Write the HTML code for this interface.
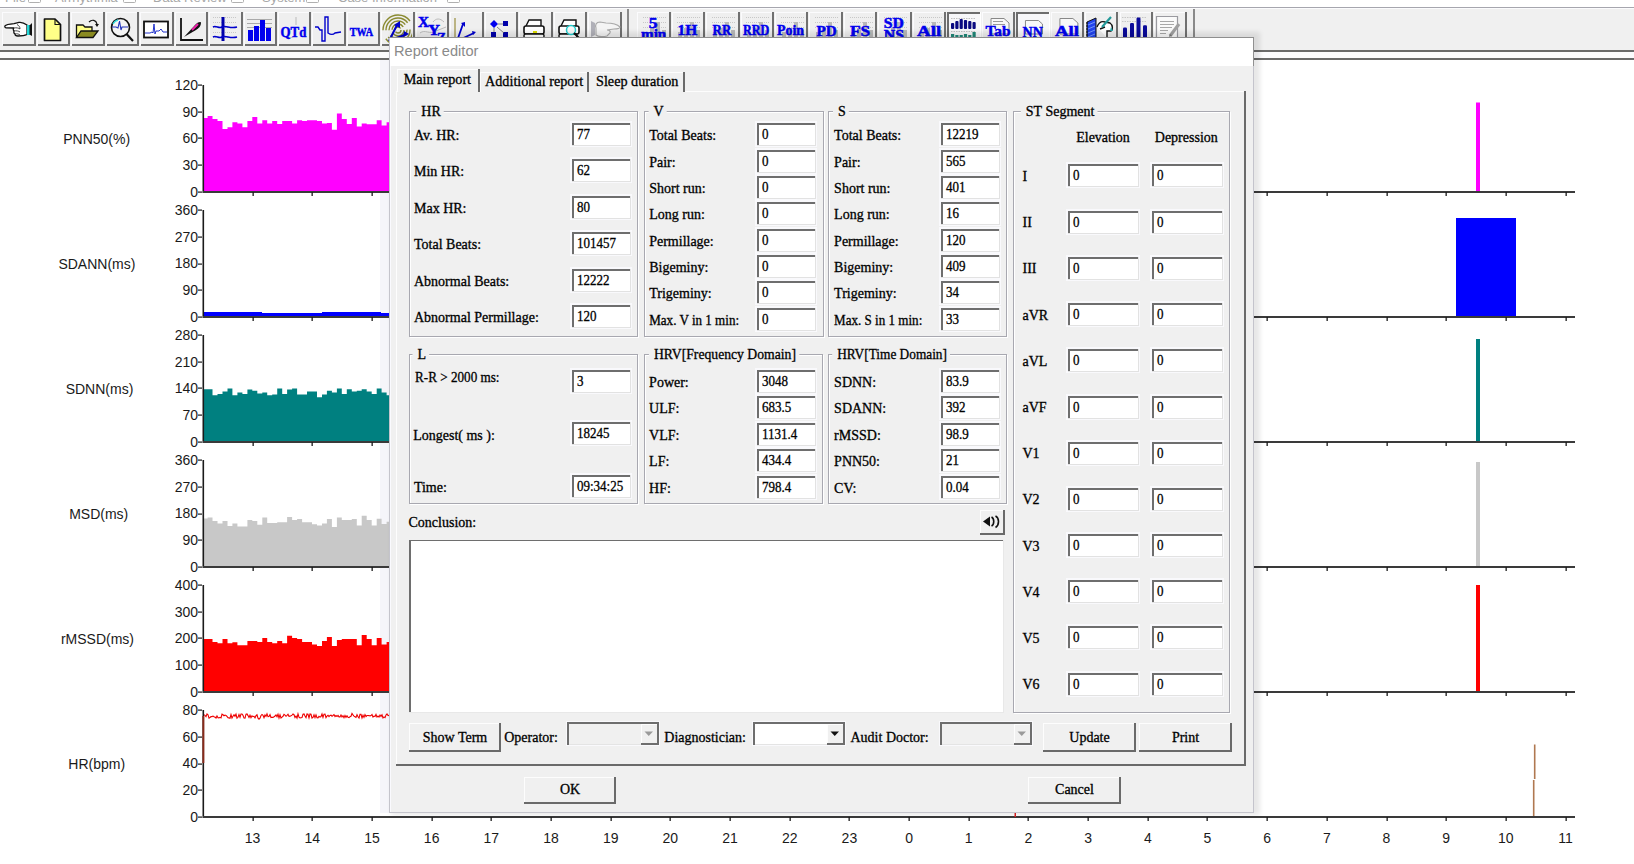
<!DOCTYPE html>
<html><head><meta charset="utf-8"><title>Report editor</title>
<style>html,body{margin:0;padding:0;background:#fff;overflow:hidden}svg{display:block}text{white-space:pre}</style></head>
<body><svg width="1634" height="864" viewBox="0 0 1634 864">
<defs><filter id="blur" x="-5%" y="-5%" width="110%" height="110%"><feGaussianBlur stdDeviation="2.5"/></filter></defs>
<rect x="0" y="0" width="1634" height="864" fill="#ffffff" />
<rect x="0" y="0" width="1634" height="7" fill="#ffffff" />
<text x="5" y="2.2" font-family="Liberation Sans" font-size="13" fill="#a8a8a8" text-anchor="start" >File</text>
<rect x="28.5" y="-7.5" width="12" height="10" rx="1" fill="none" stroke="#b0b0b0"/>
<text x="55" y="2.2" font-family="Liberation Sans" font-size="13" fill="#a8a8a8" text-anchor="start" >Arrhythmia</text>
<rect x="123.5" y="-7.5" width="12" height="10" rx="1" fill="none" stroke="#b0b0b0"/>
<text x="153" y="2.2" font-family="Liberation Sans" font-size="13" fill="#a8a8a8" text-anchor="start" >Data Review</text>
<rect x="231.5" y="-7.5" width="12" height="10" rx="1" fill="none" stroke="#b0b0b0"/>
<text x="262" y="2.2" font-family="Liberation Sans" font-size="13" fill="#a8a8a8" text-anchor="start" >System</text>
<rect x="306.5" y="-7.5" width="12" height="10" rx="1" fill="none" stroke="#b0b0b0"/>
<text x="338" y="2.2" font-family="Liberation Sans" font-size="13" fill="#a8a8a8" text-anchor="start" >Case Information</text>
<rect x="447.5" y="-7.5" width="12" height="10" rx="1" fill="none" stroke="#b0b0b0"/>
<rect x="0" y="7" width="1634" height="1" fill="#a6a6ae" />
<rect x="0" y="8" width="1634" height="43" fill="#f0f0f0" />
<rect x="0" y="8" width="1634" height="1" fill="#fbfbfd" />
<rect x="0" y="50" width="1634" height="2" fill="#6a6a6a" />
<rect x="0" y="52" width="1634" height="6" fill="#fbfbfd" />
<rect x="0" y="58" width="1634" height="2" fill="#6a6a6a" />
<rect x="2" y="12" width="34" height="33" fill="#efefef" />
<rect x="2" y="12" width="34" height="1" fill="#fbfbfd" />
<rect x="2" y="12" width="1" height="33" fill="#fbfbfd" />
<rect x="3" y="44" width="33" height="2" fill="#707070" />
<rect x="34" y="12" width="2" height="34" fill="#707070" />
<rect x="37" y="12" width="33" height="33" fill="#efefef" />
<rect x="37" y="12" width="33" height="1" fill="#fbfbfd" />
<rect x="37" y="12" width="1" height="33" fill="#fbfbfd" />
<rect x="38" y="44" width="32" height="2" fill="#707070" />
<rect x="68" y="12" width="2" height="34" fill="#707070" />
<rect x="71" y="12" width="34" height="33" fill="#efefef" />
<rect x="71" y="12" width="34" height="1" fill="#fbfbfd" />
<rect x="71" y="12" width="1" height="33" fill="#fbfbfd" />
<rect x="72" y="44" width="33" height="2" fill="#707070" />
<rect x="103" y="12" width="2" height="34" fill="#707070" />
<rect x="106" y="12" width="33" height="33" fill="#efefef" />
<rect x="106" y="12" width="33" height="1" fill="#fbfbfd" />
<rect x="106" y="12" width="1" height="33" fill="#fbfbfd" />
<rect x="107" y="44" width="32" height="2" fill="#707070" />
<rect x="137" y="12" width="2" height="34" fill="#707070" />
<rect x="140" y="12" width="34" height="33" fill="#efefef" />
<rect x="140" y="12" width="34" height="1" fill="#fbfbfd" />
<rect x="140" y="12" width="1" height="33" fill="#fbfbfd" />
<rect x="141" y="44" width="33" height="2" fill="#707070" />
<rect x="172" y="12" width="2" height="34" fill="#707070" />
<rect x="175" y="12" width="33" height="33" fill="#efefef" />
<rect x="175" y="12" width="33" height="1" fill="#fbfbfd" />
<rect x="175" y="12" width="1" height="33" fill="#fbfbfd" />
<rect x="176" y="44" width="32" height="2" fill="#707070" />
<rect x="206" y="12" width="2" height="34" fill="#707070" />
<rect x="209" y="12" width="34" height="33" fill="#efefef" />
<rect x="209" y="12" width="34" height="1" fill="#fbfbfd" />
<rect x="209" y="12" width="1" height="33" fill="#fbfbfd" />
<rect x="210" y="44" width="33" height="2" fill="#707070" />
<rect x="241" y="12" width="2" height="34" fill="#707070" />
<rect x="244" y="12" width="33" height="33" fill="#efefef" />
<rect x="244" y="12" width="33" height="1" fill="#fbfbfd" />
<rect x="244" y="12" width="1" height="33" fill="#fbfbfd" />
<rect x="245" y="44" width="32" height="2" fill="#707070" />
<rect x="275" y="12" width="2" height="34" fill="#707070" />
<rect x="278" y="12" width="33" height="33" fill="#efefef" />
<rect x="278" y="12" width="33" height="1" fill="#fbfbfd" />
<rect x="278" y="12" width="1" height="33" fill="#fbfbfd" />
<rect x="279" y="44" width="32" height="2" fill="#707070" />
<rect x="309" y="12" width="2" height="34" fill="#707070" />
<rect x="312" y="12" width="34" height="33" fill="#efefef" />
<rect x="312" y="12" width="34" height="1" fill="#fbfbfd" />
<rect x="312" y="12" width="1" height="33" fill="#fbfbfd" />
<rect x="313" y="44" width="33" height="2" fill="#707070" />
<rect x="344" y="12" width="2" height="34" fill="#707070" />
<rect x="347" y="12" width="33" height="33" fill="#efefef" />
<rect x="347" y="12" width="33" height="1" fill="#fbfbfd" />
<rect x="347" y="12" width="1" height="33" fill="#fbfbfd" />
<rect x="348" y="44" width="32" height="2" fill="#707070" />
<rect x="378" y="12" width="2" height="34" fill="#707070" />
<rect x="381" y="12" width="34" height="33" fill="#efefef" />
<rect x="381" y="12" width="34" height="1" fill="#fbfbfd" />
<rect x="381" y="12" width="1" height="33" fill="#fbfbfd" />
<rect x="382" y="44" width="33" height="2" fill="#707070" />
<rect x="413" y="12" width="2" height="34" fill="#707070" />
<rect x="416" y="12" width="33" height="33" fill="#efefef" />
<rect x="416" y="12" width="33" height="1" fill="#fbfbfd" />
<rect x="416" y="12" width="1" height="33" fill="#fbfbfd" />
<rect x="417" y="44" width="32" height="2" fill="#707070" />
<rect x="447" y="12" width="2" height="34" fill="#707070" />
<rect x="450" y="12" width="34" height="33" fill="#efefef" />
<rect x="450" y="12" width="34" height="1" fill="#fbfbfd" />
<rect x="450" y="12" width="1" height="33" fill="#fbfbfd" />
<rect x="451" y="44" width="33" height="2" fill="#707070" />
<rect x="482" y="12" width="2" height="34" fill="#707070" />
<rect x="485" y="12" width="33" height="33" fill="#efefef" />
<rect x="485" y="12" width="33" height="1" fill="#fbfbfd" />
<rect x="485" y="12" width="1" height="33" fill="#fbfbfd" />
<rect x="486" y="44" width="32" height="2" fill="#707070" />
<rect x="516" y="12" width="2" height="34" fill="#707070" />
<rect x="519" y="12" width="34" height="33" fill="#efefef" />
<rect x="519" y="12" width="34" height="1" fill="#fbfbfd" />
<rect x="519" y="12" width="1" height="33" fill="#fbfbfd" />
<rect x="520" y="44" width="33" height="2" fill="#707070" />
<rect x="551" y="12" width="2" height="34" fill="#707070" />
<rect x="554" y="12" width="33" height="33" fill="#efefef" />
<rect x="554" y="12" width="33" height="1" fill="#fbfbfd" />
<rect x="554" y="12" width="1" height="33" fill="#fbfbfd" />
<rect x="555" y="44" width="32" height="2" fill="#707070" />
<rect x="585" y="12" width="2" height="34" fill="#707070" />
<rect x="588" y="12" width="34" height="33" fill="#efefef" />
<rect x="588" y="12" width="34" height="1" fill="#fbfbfd" />
<rect x="588" y="12" width="1" height="33" fill="#fbfbfd" />
<rect x="589" y="44" width="33" height="2" fill="#707070" />
<rect x="620" y="12" width="2" height="34" fill="#707070" />
<rect x="627" y="9" width="2" height="38" fill="#8a8a8a" />
<rect x="637" y="12" width="34" height="33" fill="#efefef" />
<rect x="637" y="12" width="34" height="1" fill="#fbfbfd" />
<rect x="637" y="12" width="1" height="33" fill="#fbfbfd" />
<rect x="638" y="44" width="33" height="2" fill="#707070" />
<rect x="669" y="12" width="2" height="34" fill="#707070" />
<rect x="672" y="12" width="33" height="33" fill="#efefef" />
<rect x="672" y="12" width="33" height="1" fill="#fbfbfd" />
<rect x="672" y="12" width="1" height="33" fill="#fbfbfd" />
<rect x="673" y="44" width="32" height="2" fill="#707070" />
<rect x="703" y="12" width="2" height="34" fill="#707070" />
<rect x="706" y="12" width="34" height="33" fill="#efefef" />
<rect x="706" y="12" width="34" height="1" fill="#fbfbfd" />
<rect x="706" y="12" width="1" height="33" fill="#fbfbfd" />
<rect x="707" y="44" width="33" height="2" fill="#707070" />
<rect x="738" y="12" width="2" height="34" fill="#707070" />
<rect x="741" y="12" width="33" height="33" fill="#efefef" />
<rect x="741" y="12" width="33" height="1" fill="#fbfbfd" />
<rect x="741" y="12" width="1" height="33" fill="#fbfbfd" />
<rect x="742" y="44" width="32" height="2" fill="#707070" />
<rect x="772" y="12" width="2" height="34" fill="#707070" />
<rect x="775" y="12" width="33" height="33" fill="#efefef" />
<rect x="775" y="12" width="33" height="1" fill="#fbfbfd" />
<rect x="775" y="12" width="1" height="33" fill="#fbfbfd" />
<rect x="776" y="44" width="32" height="2" fill="#707070" />
<rect x="806" y="12" width="2" height="34" fill="#707070" />
<rect x="809" y="12" width="34" height="33" fill="#efefef" />
<rect x="809" y="12" width="34" height="1" fill="#fbfbfd" />
<rect x="809" y="12" width="1" height="33" fill="#fbfbfd" />
<rect x="810" y="44" width="33" height="2" fill="#707070" />
<rect x="841" y="12" width="2" height="34" fill="#707070" />
<rect x="844" y="12" width="33" height="33" fill="#efefef" />
<rect x="844" y="12" width="33" height="1" fill="#fbfbfd" />
<rect x="844" y="12" width="1" height="33" fill="#fbfbfd" />
<rect x="845" y="44" width="32" height="2" fill="#707070" />
<rect x="875" y="12" width="2" height="34" fill="#707070" />
<rect x="878" y="12" width="34" height="33" fill="#efefef" />
<rect x="878" y="12" width="34" height="1" fill="#fbfbfd" />
<rect x="878" y="12" width="1" height="33" fill="#fbfbfd" />
<rect x="879" y="44" width="33" height="2" fill="#707070" />
<rect x="910" y="12" width="2" height="34" fill="#707070" />
<rect x="913" y="12" width="33" height="33" fill="#efefef" />
<rect x="913" y="12" width="33" height="1" fill="#fbfbfd" />
<rect x="913" y="12" width="1" height="33" fill="#fbfbfd" />
<rect x="914" y="44" width="32" height="2" fill="#707070" />
<rect x="944" y="12" width="2" height="34" fill="#707070" />
<rect x="947" y="12" width="34" height="33" fill="#f7f7f9" />
<rect x="947" y="12" width="34" height="2" fill="#6d6d6d" />
<rect x="947" y="12" width="2" height="33" fill="#6d6d6d" />
<rect x="947" y="44" width="34" height="1" fill="#ffffff" />
<rect x="980" y="12" width="1" height="33" fill="#ffffff" />
<rect x="982" y="12" width="33" height="33" fill="#efefef" />
<rect x="982" y="12" width="33" height="1" fill="#fbfbfd" />
<rect x="982" y="12" width="1" height="33" fill="#fbfbfd" />
<rect x="983" y="44" width="32" height="2" fill="#707070" />
<rect x="1013" y="12" width="2" height="34" fill="#707070" />
<rect x="1016" y="12" width="34" height="33" fill="#f7f7f9" />
<rect x="1016" y="12" width="34" height="2" fill="#6d6d6d" />
<rect x="1016" y="12" width="2" height="33" fill="#6d6d6d" />
<rect x="1016" y="44" width="34" height="1" fill="#ffffff" />
<rect x="1049" y="12" width="1" height="33" fill="#ffffff" />
<rect x="1051" y="12" width="33" height="33" fill="#efefef" />
<rect x="1051" y="12" width="33" height="1" fill="#fbfbfd" />
<rect x="1051" y="12" width="1" height="33" fill="#fbfbfd" />
<rect x="1052" y="44" width="32" height="2" fill="#707070" />
<rect x="1082" y="12" width="2" height="34" fill="#707070" />
<rect x="1085" y="12" width="33" height="33" fill="#efefef" />
<rect x="1085" y="12" width="33" height="1" fill="#fbfbfd" />
<rect x="1085" y="12" width="1" height="33" fill="#fbfbfd" />
<rect x="1086" y="44" width="32" height="2" fill="#707070" />
<rect x="1116" y="12" width="2" height="34" fill="#707070" />
<rect x="1120" y="12" width="33" height="33" fill="#efefef" />
<rect x="1120" y="12" width="33" height="1" fill="#fbfbfd" />
<rect x="1120" y="12" width="1" height="33" fill="#fbfbfd" />
<rect x="1121" y="44" width="32" height="2" fill="#707070" />
<rect x="1151" y="12" width="2" height="34" fill="#707070" />
<rect x="1154" y="12" width="33" height="33" fill="#efefef" />
<rect x="1154" y="12" width="33" height="1" fill="#fbfbfd" />
<rect x="1154" y="12" width="1" height="33" fill="#fbfbfd" />
<rect x="1155" y="44" width="32" height="2" fill="#707070" />
<rect x="1185" y="12" width="2" height="34" fill="#707070" />
<rect x="1193" y="9" width="2" height="38" fill="#8a8a8a" />
<path d="M5,25.8 C6,24.5 10,24 14,23.6 L19,22.4 C22,22 25,23.5 27,25 L27,34.5 C25,35.5 22,36 18,36 C16,36 15,35 15,34 C14,33.5 13.5,32 14,31 C13,30 13,28.5 14,28 L6,27.8 C4.8,27.6 4.6,26.5 5,25.8 Z" fill="#fff" stroke="#111" stroke-width="1.3"/>
<path d="M14,28 C16,27.5 19,28 20,29 M14,31 C16,30.5 19,31 20,32 M15,34 C17,33.5 19,34 20,35 M17,24.5 C19,25.5 20,27 20,29" fill="none" stroke="#333" stroke-width="0.9"/>
<rect x="27" y="25" width="3" height="10" fill="#22d8d8"/><path d="M29.5,25.5 L32,23 L32,36 L29.5,34.5 Z" fill="#111"/>
<path d="M44.5,19 L55,19 L60.5,24.5 L60.5,40.5 L44.5,40.5 Z" fill="#ffff88" stroke="#111" stroke-width="1.7" stroke-linejoin="round"/><path d="M55,19 L55,24.5 L60.5,24.5" fill="none" stroke="#111" stroke-width="1.1"/>
<path d="M76.5,25 L83,25 L85,27 L92,27 L92,37 L76.5,37 Z" fill="#ffff88" stroke="#111" stroke-width="1.3"/><path d="M76.5,37.5 L81,31 L98,31 L93,37.5 Z" fill="#8a8a20" stroke="#111" stroke-width="1.3"/><path d="M89,22 C92,19 96,20 97,24" fill="none" stroke="#111" stroke-width="1.2"/><path d="M95,24 L99,24 L97,27 Z" fill="#111"/>
<circle cx="120.5" cy="27.5" r="9" fill="#f4f4f4" stroke="#111" stroke-width="1.6"/><path d="M112,27 L116,27 L118,28 L119.5,21 L121,30 L122,27 L128,27" fill="none" stroke="#2233bb" stroke-width="1.1"/><path d="M126.5,34 L133,41" stroke="#111" stroke-width="2.2"/><path d="M113,24 A8,8 0 0 1 118,20" stroke="#33dddd" stroke-width="1.5" fill="none"/>
<rect x="144" y="21.5" width="24" height="16" fill="#fff" stroke="#111" stroke-width="1.8"/>
<path d="M145,33 L150,33 L152,32 L153,33 L154,24 L155,34 L156,31 L159,31 L161,29 L163,32 L167,32" fill="none" stroke="#2233cc" stroke-width="1"/>
<path d="M181,18 L181,40 L203,40" fill="none" stroke="#111" stroke-width="1.8"/><path d="M184,37 L196,24 C198,22 201,21 201,23 C201,26 199,28 196,30 Z" fill="#111"/><path d="M192,30 L198,24" stroke="#ee22aa" stroke-width="2"/>
<line x1="213" y1="17.5" x2="237" y2="17.5" stroke="#c8c8c8" stroke-width="1" stroke-dasharray="1,1"/>
<line x1="213" y1="22.5" x2="237" y2="22.5" stroke="#c8c8c8" stroke-width="1" stroke-dasharray="1,1"/>
<line x1="213" y1="27.5" x2="237" y2="27.5" stroke="#c8c8c8" stroke-width="1" stroke-dasharray="1,1"/>
<line x1="213" y1="32.5" x2="237" y2="32.5" stroke="#c8c8c8" stroke-width="1" stroke-dasharray="1,1"/>
<line x1="213" y1="37.5" x2="237" y2="37.5" stroke="#c8c8c8" stroke-width="1" stroke-dasharray="1,1"/>
<path d="M223,17 L223,41" stroke="#0000aa" stroke-width="3"/><path d="M213,27 C216,25 219,29 222,27 C226,25 230,29 237,27 M213,37 C216,35 219,39 222,37 C226,35 230,39 237,37" fill="none" stroke="#0000cc" stroke-width="1.6"/>
<path d="M247,19.5 L272,19.5 M247,23.5 L272,23.5 M247,27.5 L272,27.5" stroke="#aaaaaa" stroke-width="1"/>
<rect x="248" y="30" width="5" height="11" fill="#0000ee" />
<rect x="254" y="26" width="5" height="15" fill="#0000ee" />
<rect x="260" y="20" width="5" height="21" fill="#0000ee" />
<rect x="266" y="28" width="5" height="13" fill="#0000ee" />
<path d="M296,17 L296,25 M284,37 C287,35 290,39 293,37" stroke="#bbb" stroke-width="1" fill="none"/>
<text x="280.5" y="37" font-family="Liberation Serif" font-weight="bold" font-size="15" fill="#0000ee" stroke="#0000ee" stroke-width="0.5" textLength="25.80000000000001" lengthAdjust="spacingAndGlyphs">QTd</text>
<path d="M315,27 L318,27 L320,30 L322,30 L322,41 L325,41 L325,17 L328,17 L328,33 C331,35 333,35 335,33 L341,32" fill="none" stroke="#0000cc" stroke-width="1.4"/>
<text x="349.8" y="36" font-family="Liberation Serif" font-weight="bold" font-size="13" fill="#0000ee" stroke="#0000ee" stroke-width="0.5" textLength="23.19999999999999" lengthAdjust="spacingAndGlyphs">TWA</text>
<clipPath id="fpc"><rect x="382" y="14" width="30" height="30"/></clipPath><g clip-path="url(#fpc)">
<circle cx="398" cy="30" r="3" fill="none" stroke="#8a8a30" stroke-width="1.4" stroke-dasharray="7.5,1.7999999999999998"/>
<circle cx="398" cy="30" r="6" fill="none" stroke="#8a8a30" stroke-width="1.4" stroke-dasharray="15.0,3.5999999999999996"/>
<circle cx="398" cy="30" r="9" fill="none" stroke="#8a8a30" stroke-width="1.4" stroke-dasharray="22.5,5.3999999999999995"/>
<circle cx="398" cy="30" r="12" fill="none" stroke="#8a8a30" stroke-width="1.4" stroke-dasharray="30.0,7.199999999999999"/>
<circle cx="398" cy="30" r="15" fill="none" stroke="#8a8a30" stroke-width="1.4" stroke-dasharray="37.5,9.0"/>
</g>
<path d="M389,41 L397,25 M389,41 L407,34" fill="none" stroke="#0000cc" stroke-width="2"/><path d="M394,25 L400,21 L400,28 Z M404,31 L409,34 L403,37 Z" fill="#0000cc"/>
<path d="M433,22 C436,18 440,18 444,22 M420,33 C425,29 430,35 436,31 L446,27" fill="none" stroke="#bbb" stroke-width="1"/>
<text x="418" y="27" font-family="Liberation Serif" font-weight="bold" font-size="14" fill="#0000ee" stroke="#0000ee" stroke-width="0.5" textLength="11" lengthAdjust="spacingAndGlyphs">X</text>
<text x="428" y="35" font-family="Liberation Serif" font-weight="bold" font-size="14" fill="#0000ee" stroke="#0000ee" stroke-width="0.5" textLength="12" lengthAdjust="spacingAndGlyphs">Y</text>
<text x="437" y="43" font-family="Liberation Serif" font-weight="bold" font-size="14" fill="#0000ee" stroke="#0000ee" stroke-width="0.5" textLength="9" lengthAdjust="spacingAndGlyphs">Z</text>
<path d="M455,18 L455,41" stroke="#aaa060" stroke-width="1.5"/><path d="M457,41 L463,24 M457,41 L474,33" stroke="#0000cc" stroke-width="1.8"/><path d="M461,23 L465,22 L465,27 Z M472,31 L476,32 L473,35 Z" fill="#0000cc"/>
<path d="M494,20 L498,24 L494,28 L490,24 Z" fill="#0000ee"/><rect x="503" y="21" width="5" height="5" fill="#0000aa"/><rect x="491" y="32" width="5" height="5" fill="#0000aa"/><rect x="503" y="32" width="5" height="5" fill="#0000aa"/><path d="M498,24 L503,24 M494,28 L494,32 M497,27 L504,33" stroke="#666" stroke-width="0.8"/>
<path d="M526,26 L529,20 L541,20 L541,26" fill="#fff" stroke="#111" stroke-width="1.4"/><rect x="524" y="26" width="20" height="8" rx="2" fill="#fff" stroke="#111" stroke-width="1.6"/><rect x="524" y="34" width="20" height="4" rx="1.5" fill="#fff" stroke="#111" stroke-width="1.4"/><rect x="533" y="31" width="4" height="2" fill="#dddd00"/>
<path d="M561,26 L564,20 L576,20 L576,26" fill="#fff" stroke="#111" stroke-width="1.4"/><rect x="559" y="26" width="20" height="8" rx="2" fill="#fff" stroke="#111" stroke-width="1.6"/><rect x="559" y="34" width="18" height="4" rx="1.5" fill="#fff" stroke="#111" stroke-width="1.4"/><circle cx="571" cy="30" r="4.5" fill="#f8f8f8" stroke="#22cccc" stroke-width="1.5"/><path d="M574,33 L579,38" stroke="#111" stroke-width="2"/>
<g transform="translate(620,21) scale(-1,1)"><path d="M0,6 C3,3 10,2 14,2 L20,1 C24,1 25,4 24,7 L24,14 C22,16 16,16 13,15 L10,12 C9,10 11,9 13,9 L6,8 C2,8 0,7 0,6 Z" fill="#f4f4f4" stroke="#a8a8a8" stroke-width="1.1"/><path d="M25,2 L29,0 L29,16 L25,14 Z" fill="#b0b0b8"/></g>
<line x1="643" y1="17.5" x2="667" y2="17.5" stroke="#c8c8c8" stroke-width="1" stroke-dasharray="1,1"/>
<line x1="643" y1="22.5" x2="667" y2="22.5" stroke="#c8c8c8" stroke-width="1" stroke-dasharray="1,1"/>
<line x1="643" y1="27.5" x2="667" y2="27.5" stroke="#c8c8c8" stroke-width="1" stroke-dasharray="1,1"/>
<rect x="644.0" y="32" width="4" height="8" fill="#b8b8b8" />
<rect x="650.0" y="28" width="4" height="12" fill="#b8b8b8" />
<rect x="656.0" y="22" width="4" height="18" fill="#b8b8b8" />
<rect x="662.0" y="30" width="4" height="10" fill="#b8b8b8" />
<line x1="677" y1="17.5" x2="701" y2="17.5" stroke="#c8c8c8" stroke-width="1" stroke-dasharray="1,1"/>
<line x1="677" y1="22.5" x2="701" y2="22.5" stroke="#c8c8c8" stroke-width="1" stroke-dasharray="1,1"/>
<line x1="677" y1="27.5" x2="701" y2="27.5" stroke="#c8c8c8" stroke-width="1" stroke-dasharray="1,1"/>
<rect x="678.0" y="32" width="4" height="8" fill="#b8b8b8" />
<rect x="684.0" y="28" width="4" height="12" fill="#b8b8b8" />
<rect x="690.0" y="22" width="4" height="18" fill="#b8b8b8" />
<rect x="696.0" y="30" width="4" height="10" fill="#b8b8b8" />
<line x1="712" y1="17.5" x2="736" y2="17.5" stroke="#c8c8c8" stroke-width="1" stroke-dasharray="1,1"/>
<line x1="712" y1="22.5" x2="736" y2="22.5" stroke="#c8c8c8" stroke-width="1" stroke-dasharray="1,1"/>
<line x1="712" y1="27.5" x2="736" y2="27.5" stroke="#c8c8c8" stroke-width="1" stroke-dasharray="1,1"/>
<rect x="713.0" y="32" width="4" height="8" fill="#b8b8b8" />
<rect x="719.0" y="28" width="4" height="12" fill="#b8b8b8" />
<rect x="725.0" y="22" width="4" height="18" fill="#b8b8b8" />
<rect x="731.0" y="30" width="4" height="10" fill="#b8b8b8" />
<line x1="746" y1="17.5" x2="770" y2="17.5" stroke="#c8c8c8" stroke-width="1" stroke-dasharray="1,1"/>
<line x1="746" y1="22.5" x2="770" y2="22.5" stroke="#c8c8c8" stroke-width="1" stroke-dasharray="1,1"/>
<line x1="746" y1="27.5" x2="770" y2="27.5" stroke="#c8c8c8" stroke-width="1" stroke-dasharray="1,1"/>
<rect x="747.0" y="32" width="4" height="8" fill="#b8b8b8" />
<rect x="753.0" y="28" width="4" height="12" fill="#b8b8b8" />
<rect x="759.0" y="22" width="4" height="18" fill="#b8b8b8" />
<rect x="765.0" y="30" width="4" height="10" fill="#b8b8b8" />
<line x1="781" y1="17.5" x2="805" y2="17.5" stroke="#c8c8c8" stroke-width="1" stroke-dasharray="1,1"/>
<line x1="781" y1="22.5" x2="805" y2="22.5" stroke="#c8c8c8" stroke-width="1" stroke-dasharray="1,1"/>
<line x1="781" y1="27.5" x2="805" y2="27.5" stroke="#c8c8c8" stroke-width="1" stroke-dasharray="1,1"/>
<rect x="782.0" y="32" width="4" height="8" fill="#b8b8b8" />
<rect x="788.0" y="28" width="4" height="12" fill="#b8b8b8" />
<rect x="794.0" y="22" width="4" height="18" fill="#b8b8b8" />
<rect x="800.0" y="30" width="4" height="10" fill="#b8b8b8" />
<line x1="815" y1="17.5" x2="839" y2="17.5" stroke="#c8c8c8" stroke-width="1" stroke-dasharray="1,1"/>
<line x1="815" y1="22.5" x2="839" y2="22.5" stroke="#c8c8c8" stroke-width="1" stroke-dasharray="1,1"/>
<line x1="815" y1="27.5" x2="839" y2="27.5" stroke="#c8c8c8" stroke-width="1" stroke-dasharray="1,1"/>
<rect x="816.0" y="32" width="4" height="8" fill="#b8b8b8" />
<rect x="822.0" y="28" width="4" height="12" fill="#b8b8b8" />
<rect x="828.0" y="22" width="4" height="18" fill="#b8b8b8" />
<rect x="834.0" y="30" width="4" height="10" fill="#b8b8b8" />
<line x1="850" y1="17.5" x2="874" y2="17.5" stroke="#c8c8c8" stroke-width="1" stroke-dasharray="1,1"/>
<line x1="850" y1="22.5" x2="874" y2="22.5" stroke="#c8c8c8" stroke-width="1" stroke-dasharray="1,1"/>
<line x1="850" y1="27.5" x2="874" y2="27.5" stroke="#c8c8c8" stroke-width="1" stroke-dasharray="1,1"/>
<rect x="851.0" y="32" width="4" height="8" fill="#b8b8b8" />
<rect x="857.0" y="28" width="4" height="12" fill="#b8b8b8" />
<rect x="863.0" y="22" width="4" height="18" fill="#b8b8b8" />
<rect x="869.0" y="30" width="4" height="10" fill="#b8b8b8" />
<line x1="884" y1="17.5" x2="908" y2="17.5" stroke="#c8c8c8" stroke-width="1" stroke-dasharray="1,1"/>
<line x1="884" y1="22.5" x2="908" y2="22.5" stroke="#c8c8c8" stroke-width="1" stroke-dasharray="1,1"/>
<line x1="884" y1="27.5" x2="908" y2="27.5" stroke="#c8c8c8" stroke-width="1" stroke-dasharray="1,1"/>
<rect x="885.0" y="32" width="4" height="8" fill="#b8b8b8" />
<rect x="891.0" y="28" width="4" height="12" fill="#b8b8b8" />
<rect x="897.0" y="22" width="4" height="18" fill="#b8b8b8" />
<rect x="903.0" y="30" width="4" height="10" fill="#b8b8b8" />
<line x1="919" y1="17.5" x2="943" y2="17.5" stroke="#c8c8c8" stroke-width="1" stroke-dasharray="1,1"/>
<line x1="919" y1="22.5" x2="943" y2="22.5" stroke="#c8c8c8" stroke-width="1" stroke-dasharray="1,1"/>
<line x1="919" y1="27.5" x2="943" y2="27.5" stroke="#c8c8c8" stroke-width="1" stroke-dasharray="1,1"/>
<rect x="920.0" y="32" width="4" height="8" fill="#b8b8b8" />
<rect x="926.0" y="28" width="4" height="12" fill="#b8b8b8" />
<rect x="932.0" y="22" width="4" height="18" fill="#b8b8b8" />
<rect x="938.0" y="30" width="4" height="10" fill="#b8b8b8" />
<text x="648.7" y="27.8" font-family="Liberation Serif" font-weight="bold" font-size="15" fill="#0000ee" stroke="#0000ee" stroke-width="0.5" textLength="8.799999999999955" lengthAdjust="spacingAndGlyphs">5</text>
<text x="641" y="38.6" font-family="Liberation Serif" font-weight="bold" font-size="14" fill="#0000ee" stroke="#0000ee" stroke-width="0.5" textLength="25.299999999999955" lengthAdjust="spacingAndGlyphs">min</text>
<text x="677.4" y="35" font-family="Liberation Serif" font-weight="bold" font-size="15" fill="#0000ee" stroke="#0000ee" stroke-width="0.5" textLength="19.800000000000068" lengthAdjust="spacingAndGlyphs">1H</text>
<text x="712.6" y="35" font-family="Liberation Serif" font-weight="bold" font-size="15" fill="#0000ee" stroke="#0000ee" stroke-width="0.5" textLength="18.699999999999932" lengthAdjust="spacingAndGlyphs">RR</text>
<text x="742.9" y="35" font-family="Liberation Serif" font-weight="bold" font-size="15" fill="#0000ee" stroke="#0000ee" stroke-width="0.5" textLength="26.399999999999977" lengthAdjust="spacingAndGlyphs">RRD</text>
<text x="777" y="35" font-family="Liberation Serif" font-weight="bold" font-size="15" fill="#0000ee" stroke="#0000ee" stroke-width="0.5" textLength="27" lengthAdjust="spacingAndGlyphs">Poin</text>
<text x="816.4" y="36.4" font-family="Liberation Serif" font-weight="bold" font-size="15" fill="#0000ee" stroke="#0000ee" stroke-width="0.5" textLength="20.200000000000045" lengthAdjust="spacingAndGlyphs">PD</text>
<text x="850" y="36.4" font-family="Liberation Serif" font-weight="bold" font-size="15" fill="#0000ee" stroke="#0000ee" stroke-width="0.5" textLength="20.299999999999955" lengthAdjust="spacingAndGlyphs">FS</text>
<text x="883.8" y="28.3" font-family="Liberation Serif" font-weight="bold" font-size="14" fill="#0000ee" stroke="#0000ee" stroke-width="0.5" textLength="20.200000000000045" lengthAdjust="spacingAndGlyphs">SD</text>
<text x="883.8" y="40" font-family="Liberation Serif" font-weight="bold" font-size="14" fill="#0000ee" stroke="#0000ee" stroke-width="0.5" textLength="20.200000000000045" lengthAdjust="spacingAndGlyphs">NS</text>
<text x="917" y="36.4" font-family="Liberation Serif" font-weight="bold" font-size="15" fill="#0000ee" stroke="#0000ee" stroke-width="0.5" textLength="24.200000000000045" lengthAdjust="spacingAndGlyphs">All</text>
<path d="M951,18.5 L976,18.5" stroke="#c0c0c0" stroke-width="1" stroke-dasharray="1.5,1"/>
<rect x="951.0" y="23" width="3.2" height="6" rx="1" fill="#0a0a80"/>
<rect x="955.3" y="21" width="3.2" height="8" rx="1" fill="#0a0a80"/>
<rect x="959.6" y="19" width="3.2" height="10" rx="1" fill="#0a0a80"/>
<rect x="963.9" y="20" width="3.2" height="9" rx="1" fill="#0a0a80"/>
<rect x="968.2" y="21" width="3.2" height="8" rx="1" fill="#0a0a80"/>
<rect x="972.5" y="22" width="3.2" height="7" rx="1" fill="#0a0a80"/>
<path d="M951,31.5 L976,31.5" stroke="#c0c0c0" stroke-width="1" stroke-dasharray="1.5,1"/>
<rect x="951.0" y="34" width="3.2" height="4" fill="#208878"/>
<rect x="955.3" y="35" width="3.2" height="3" fill="#208878"/>
<rect x="959.6" y="35" width="3.2" height="3" fill="#208878"/>
<rect x="963.9" y="34" width="3.2" height="4" fill="#208878"/>
<rect x="968.2" y="35" width="3.2" height="3" fill="#208878"/>
<rect x="972.5" y="32" width="3.2" height="6" fill="#208878"/>
<path d="M991.0,18.5 L1004.0,18.5 L1009.0,23 L1009.0,34 L991.0,34 Z" fill="#f8f8f8" stroke="#888" stroke-width="1"/><path d="M993.0,21.5 L1003.0,21.5 M993.0,24.5 L1005.0,24.5" stroke="#999" stroke-width="1"/>
<text x="985.4" y="36.4" font-family="Liberation Serif" font-weight="bold" font-size="15" fill="#0000ee" stroke="#0000ee" stroke-width="0.5" textLength="25.100000000000023" lengthAdjust="spacingAndGlyphs">Tab</text>
<path d="M1025.45,20.5 L1038.45,20.5 L1042.45,24 L1042.45,34 L1025.45,34 Z" fill="#f8f8f8" stroke="#888" stroke-width="1"/>
<text x="1022.6" y="36.6" font-family="Liberation Serif" font-weight="bold" font-size="15" fill="#0000ee" stroke="#0000ee" stroke-width="0.5" textLength="20.199999999999932" lengthAdjust="spacingAndGlyphs">NN</text>
<path d="M1059.9,18.5 L1072.9,18.5 L1077.9,23 L1077.9,34 L1059.9,34 Z" fill="#f8f8f8" stroke="#888" stroke-width="1"/>
<text x="1055" y="36.4" font-family="Liberation Serif" font-weight="bold" font-size="15" fill="#0000ee" stroke="#0000ee" stroke-width="0.5" textLength="24" lengthAdjust="spacingAndGlyphs">All</text>
<path d="M1087,22 L1096,18 L1096,37.5 L1087,40 Z" fill="#2244ee" stroke="#111" stroke-width="1"/>
<path d="M1088,25 L1095,22 M1088,29 L1095,26 M1088,33 L1095,30 M1088,37 L1095,34" stroke="#88aaff" stroke-width="0.8"/>
<path d="M1086,23 L1088,23 M1086,26 L1088,26 M1086,29 L1088,29 M1086,32 L1088,32 M1086,35 L1088,35 M1086,38 L1088,38" stroke="#111" stroke-width="1"/>
<path d="M1097,27 C1099,22 1102,21 1105,22 L1110,23 C1113,25 1113,30 1111,31 L1107,31 L1107,38 M1100,29 L1105,27" fill="#fff" stroke="#111" stroke-width="1.4"/>
<path d="M1102,27 L1111,17" stroke="#229999" stroke-width="2.2"/><path d="M1111,27 L1113,31 L1110,31 Z" fill="#22aaaa"/>
<path d="M1122,17.5 L1147,17.5 M1122,21.5 L1147,21.5" stroke="#c8c8c8" stroke-width="1" stroke-dasharray="1.5,1"/>
<rect x="1123" y="27.5" width="4" height="10.299999999999997" rx="1.2" fill="#0a0a99"/>
<rect x="1130" y="23" width="4" height="14.799999999999997" rx="1.2" fill="#0a0a99"/>
<rect x="1136.5" y="17.6" width="4" height="20.199999999999996" rx="1.2" fill="#0a0a99"/>
<rect x="1143" y="25.3" width="4" height="12.499999999999996" rx="1.2" fill="#0a0a99"/>
<path d="M1156.5,16.5 L1177.5,16.5 L1177.5,37.5 L1156.5,37.5 Z" fill="#fafafa" stroke="#9a9aa0" stroke-width="1.2"/><path d="M1160,21.5 L1174,21.5 M1160,24.5 L1174,24.5 M1160,27.5 L1172,27.5 M1160,30.5 L1168,30.5 M1160,33.5 L1166,33.5" stroke="#a8a8a8" stroke-width="1"/><path d="M1170,36 L1179,24" stroke="#a0a0a0" stroke-width="3.2"/><path d="M1169,37 L1170,34 L1172,35.5 Z" fill="#777"/>
<rect x="380" y="60" width="9" height="753" fill="#f5f5fa" />
<text x="96.65" y="143.5" font-family="Liberation Sans" font-size="14" fill="#1a1a1a" text-anchor="middle" >PNN50(%)</text>
<path d="M203,192 L203.0,118.1 L207.6,118.1 L207.6,116.1 L212.5,116.1 L212.5,119.1 L217.5,119.1 L217.5,121.1 L222.5,121.1 L222.5,128.9 L227.5,128.9 L227.5,127.3 L232.4,127.3 L232.4,122.3 L237.4,122.3 L237.4,123.5 L242.4,123.5 L242.4,127.3 L247.4,127.3 L247.4,121.1 L252.3,121.1 L252.3,116.9 L257.3,116.9 L257.3,123.5 L262.3,123.5 L262.3,120.2 L267.2,120.2 L267.2,123.5 L272.2,123.5 L272.2,121.1 L277.2,121.1 L277.2,124.1 L282.2,124.1 L282.2,121.1 L287.1,121.1 L287.1,121.1 L292.1,121.1 L292.1,123.5 L297.1,123.5 L297.1,120.2 L302.1,120.2 L302.1,121.1 L307.0,121.1 L307.0,120.2 L312.0,120.2 L312.0,120.2 L317.0,120.2 L317.0,121.1 L322.0,121.1 L322.0,123.5 L326.9,123.5 L326.9,123.1 L331.9,123.1 L331.9,129.7 L336.9,129.7 L336.9,113.6 L341.8,113.6 L341.8,119.1 L346.8,119.1 L346.8,124.1 L351.8,124.1 L351.8,118.1 L356.8,118.1 L356.8,126.5 L361.7,126.5 L361.7,123.5 L366.7,123.5 L366.7,124.3 L371.7,124.3 L371.7,124.3 L376.7,124.3 L376.7,120.2 L381.6,120.2 L381.6,125.5 L386.6,125.5 L386.6,122.3 L391.6,122.3 L391.6,192 Z" fill="#ff00ff"/>
<rect x="1476" y="102.5" width="4" height="89.5" fill="#ff00ff" />
<rect x="202.5" y="85" width="1.6" height="108" fill="#1a1a1a" />
<rect x="198" y="84.5" width="4" height="1.2" fill="#1a1a1a" />
<text x="198" y="89.9" font-family="Liberation Sans" font-size="14" fill="#1a1a1a" text-anchor="end" >120</text>
<rect x="198" y="111.5" width="4" height="1.2" fill="#1a1a1a" />
<text x="198" y="116.65" font-family="Liberation Sans" font-size="14" fill="#1a1a1a" text-anchor="end" >90</text>
<rect x="198" y="137.5" width="4" height="1.2" fill="#1a1a1a" />
<text x="198" y="143.4" font-family="Liberation Sans" font-size="14" fill="#1a1a1a" text-anchor="end" >60</text>
<rect x="198" y="164.5" width="4" height="1.2" fill="#1a1a1a" />
<text x="198" y="170.15" font-family="Liberation Sans" font-size="14" fill="#1a1a1a" text-anchor="end" >30</text>
<rect x="198" y="191.5" width="4" height="1.2" fill="#1a1a1a" />
<text x="198" y="196.9" font-family="Liberation Sans" font-size="14" fill="#1a1a1a" text-anchor="end" >0</text>
<rect x="203" y="191" width="1372" height="2" fill="#3a3a3a" />
<rect x="252.5" y="192" width="1.3" height="4" fill="#1a1a1a" />
<rect x="311.5" y="192" width="1.3" height="4" fill="#1a1a1a" />
<rect x="371.5" y="192" width="1.3" height="4" fill="#1a1a1a" />
<rect x="431.5" y="192" width="1.3" height="4" fill="#1a1a1a" />
<rect x="490.5" y="192" width="1.3" height="4" fill="#1a1a1a" />
<rect x="550.5" y="192" width="1.3" height="4" fill="#1a1a1a" />
<rect x="610.5" y="192" width="1.3" height="4" fill="#1a1a1a" />
<rect x="669.5" y="192" width="1.3" height="4" fill="#1a1a1a" />
<rect x="729.5" y="192" width="1.3" height="4" fill="#1a1a1a" />
<rect x="789.5" y="192" width="1.3" height="4" fill="#1a1a1a" />
<rect x="848.5" y="192" width="1.3" height="4" fill="#1a1a1a" />
<rect x="908.5" y="192" width="1.3" height="4" fill="#1a1a1a" />
<rect x="968.5" y="192" width="1.3" height="4" fill="#1a1a1a" />
<rect x="1027.5" y="192" width="1.3" height="4" fill="#1a1a1a" />
<rect x="1087.5" y="192" width="1.3" height="4" fill="#1a1a1a" />
<rect x="1147.5" y="192" width="1.3" height="4" fill="#1a1a1a" />
<rect x="1206.5" y="192" width="1.3" height="4" fill="#1a1a1a" />
<rect x="1266.5" y="192" width="1.3" height="4" fill="#1a1a1a" />
<rect x="1326.5" y="192" width="1.3" height="4" fill="#1a1a1a" />
<rect x="1386.5" y="192" width="1.3" height="4" fill="#1a1a1a" />
<rect x="1445.5" y="192" width="1.3" height="4" fill="#1a1a1a" />
<rect x="1505.5" y="192" width="1.3" height="4" fill="#1a1a1a" />
<rect x="1565.5" y="192" width="1.3" height="4" fill="#1a1a1a" />
<text x="96.9" y="268.5" font-family="Liberation Sans" font-size="14" fill="#1a1a1a" text-anchor="middle" >SDANN(ms)</text>
<path d="M203,317 L203,312 L262,312 L262,313 L322,313 L322,312 L381,312 L381,313 L392,313 L392,317 Z" fill="#0000ff"/>
<rect x="1456" y="218" width="60" height="99" fill="#0000ff" />
<rect x="202.5" y="210" width="1.6" height="108" fill="#1a1a1a" />
<rect x="198" y="209.5" width="4" height="1.2" fill="#1a1a1a" />
<text x="198" y="214.9" font-family="Liberation Sans" font-size="14" fill="#1a1a1a" text-anchor="end" >360</text>
<rect x="198" y="236.5" width="4" height="1.2" fill="#1a1a1a" />
<text x="198" y="241.65" font-family="Liberation Sans" font-size="14" fill="#1a1a1a" text-anchor="end" >270</text>
<rect x="198" y="263.5" width="4" height="1.2" fill="#1a1a1a" />
<text x="198" y="268.4" font-family="Liberation Sans" font-size="14" fill="#1a1a1a" text-anchor="end" >180</text>
<rect x="198" y="289.5" width="4" height="1.2" fill="#1a1a1a" />
<text x="198" y="295.15" font-family="Liberation Sans" font-size="14" fill="#1a1a1a" text-anchor="end" >90</text>
<rect x="198" y="316.5" width="4" height="1.2" fill="#1a1a1a" />
<text x="198" y="321.9" font-family="Liberation Sans" font-size="14" fill="#1a1a1a" text-anchor="end" >0</text>
<rect x="203" y="316" width="1372" height="2" fill="#3a3a3a" />
<rect x="252.5" y="317" width="1.3" height="4" fill="#1a1a1a" />
<rect x="311.5" y="317" width="1.3" height="4" fill="#1a1a1a" />
<rect x="371.5" y="317" width="1.3" height="4" fill="#1a1a1a" />
<rect x="431.5" y="317" width="1.3" height="4" fill="#1a1a1a" />
<rect x="490.5" y="317" width="1.3" height="4" fill="#1a1a1a" />
<rect x="550.5" y="317" width="1.3" height="4" fill="#1a1a1a" />
<rect x="610.5" y="317" width="1.3" height="4" fill="#1a1a1a" />
<rect x="669.5" y="317" width="1.3" height="4" fill="#1a1a1a" />
<rect x="729.5" y="317" width="1.3" height="4" fill="#1a1a1a" />
<rect x="789.5" y="317" width="1.3" height="4" fill="#1a1a1a" />
<rect x="848.5" y="317" width="1.3" height="4" fill="#1a1a1a" />
<rect x="908.5" y="317" width="1.3" height="4" fill="#1a1a1a" />
<rect x="968.5" y="317" width="1.3" height="4" fill="#1a1a1a" />
<rect x="1027.5" y="317" width="1.3" height="4" fill="#1a1a1a" />
<rect x="1087.5" y="317" width="1.3" height="4" fill="#1a1a1a" />
<rect x="1147.5" y="317" width="1.3" height="4" fill="#1a1a1a" />
<rect x="1206.5" y="317" width="1.3" height="4" fill="#1a1a1a" />
<rect x="1266.5" y="317" width="1.3" height="4" fill="#1a1a1a" />
<rect x="1326.5" y="317" width="1.3" height="4" fill="#1a1a1a" />
<rect x="1386.5" y="317" width="1.3" height="4" fill="#1a1a1a" />
<rect x="1445.5" y="317" width="1.3" height="4" fill="#1a1a1a" />
<rect x="1505.5" y="317" width="1.3" height="4" fill="#1a1a1a" />
<rect x="1565.5" y="317" width="1.3" height="4" fill="#1a1a1a" />
<text x="99.5" y="393.5" font-family="Liberation Sans" font-size="14" fill="#1a1a1a" text-anchor="middle" >SDNN(ms)</text>
<path d="M203,442 L203.0,389.3 L207.6,389.3 L207.6,389.3 L212.5,389.3 L212.5,395.3 L217.5,395.3 L217.5,394.1 L222.5,394.1 L222.5,391.6 L227.5,391.6 L227.5,388.4 L232.4,388.4 L232.4,395.3 L237.4,395.3 L237.4,392.5 L242.4,392.5 L242.4,394.1 L247.4,394.1 L247.4,389.5 L252.3,389.5 L252.3,390.7 L257.3,390.7 L257.3,393.4 L262.3,393.4 L262.3,392.5 L267.2,392.5 L267.2,395.3 L272.2,395.3 L272.2,394.6 L277.2,394.6 L277.2,388.4 L282.2,388.4 L282.2,394.1 L287.1,394.1 L287.1,389.5 L292.1,389.5 L292.1,388.4 L297.1,388.4 L297.1,394.6 L302.1,394.6 L302.1,394.6 L307.0,394.6 L307.0,391.6 L312.0,391.6 L312.0,391.6 L317.0,391.6 L317.0,397.3 L322.0,397.3 L322.0,394.6 L326.9,394.6 L326.9,390.7 L331.9,390.7 L331.9,392.5 L336.9,392.5 L336.9,388.4 L341.8,388.4 L341.8,394.1 L346.8,394.1 L346.8,389.3 L351.8,389.3 L351.8,391.6 L356.8,391.6 L356.8,390.7 L361.7,390.7 L361.7,389.3 L366.7,389.3 L366.7,391.6 L371.7,391.6 L371.7,394.1 L376.7,394.1 L376.7,388.4 L381.6,388.4 L381.6,392.5 L386.6,392.5 L386.6,395.3 L391.6,395.3 L391.6,442 Z" fill="#008080"/>
<rect x="1476" y="339" width="4" height="103" fill="#008080" />
<rect x="202.5" y="335" width="1.6" height="108" fill="#1a1a1a" />
<rect x="198" y="334.5" width="4" height="1.2" fill="#1a1a1a" />
<text x="198" y="339.9" font-family="Liberation Sans" font-size="14" fill="#1a1a1a" text-anchor="end" >280</text>
<rect x="198" y="361.5" width="4" height="1.2" fill="#1a1a1a" />
<text x="198" y="366.65" font-family="Liberation Sans" font-size="14" fill="#1a1a1a" text-anchor="end" >210</text>
<rect x="198" y="387.5" width="4" height="1.2" fill="#1a1a1a" />
<text x="198" y="393.4" font-family="Liberation Sans" font-size="14" fill="#1a1a1a" text-anchor="end" >140</text>
<rect x="198" y="414.5" width="4" height="1.2" fill="#1a1a1a" />
<text x="198" y="420.15" font-family="Liberation Sans" font-size="14" fill="#1a1a1a" text-anchor="end" >70</text>
<rect x="198" y="441.5" width="4" height="1.2" fill="#1a1a1a" />
<text x="198" y="446.9" font-family="Liberation Sans" font-size="14" fill="#1a1a1a" text-anchor="end" >0</text>
<rect x="203" y="441" width="1372" height="2" fill="#3a3a3a" />
<rect x="252.5" y="442" width="1.3" height="4" fill="#1a1a1a" />
<rect x="311.5" y="442" width="1.3" height="4" fill="#1a1a1a" />
<rect x="371.5" y="442" width="1.3" height="4" fill="#1a1a1a" />
<rect x="431.5" y="442" width="1.3" height="4" fill="#1a1a1a" />
<rect x="490.5" y="442" width="1.3" height="4" fill="#1a1a1a" />
<rect x="550.5" y="442" width="1.3" height="4" fill="#1a1a1a" />
<rect x="610.5" y="442" width="1.3" height="4" fill="#1a1a1a" />
<rect x="669.5" y="442" width="1.3" height="4" fill="#1a1a1a" />
<rect x="729.5" y="442" width="1.3" height="4" fill="#1a1a1a" />
<rect x="789.5" y="442" width="1.3" height="4" fill="#1a1a1a" />
<rect x="848.5" y="442" width="1.3" height="4" fill="#1a1a1a" />
<rect x="908.5" y="442" width="1.3" height="4" fill="#1a1a1a" />
<rect x="968.5" y="442" width="1.3" height="4" fill="#1a1a1a" />
<rect x="1027.5" y="442" width="1.3" height="4" fill="#1a1a1a" />
<rect x="1087.5" y="442" width="1.3" height="4" fill="#1a1a1a" />
<rect x="1147.5" y="442" width="1.3" height="4" fill="#1a1a1a" />
<rect x="1206.5" y="442" width="1.3" height="4" fill="#1a1a1a" />
<rect x="1266.5" y="442" width="1.3" height="4" fill="#1a1a1a" />
<rect x="1326.5" y="442" width="1.3" height="4" fill="#1a1a1a" />
<rect x="1386.5" y="442" width="1.3" height="4" fill="#1a1a1a" />
<rect x="1445.5" y="442" width="1.3" height="4" fill="#1a1a1a" />
<rect x="1505.5" y="442" width="1.3" height="4" fill="#1a1a1a" />
<rect x="1565.5" y="442" width="1.3" height="4" fill="#1a1a1a" />
<text x="98.75" y="518.5" font-family="Liberation Sans" font-size="14" fill="#1a1a1a" text-anchor="middle" >MSD(ms)</text>
<path d="M203,567 L203.0,518.4 L207.6,518.4 L207.6,517.5 L212.5,517.5 L212.5,521.1 L217.5,521.1 L217.5,523.5 L222.5,523.5 L222.5,521.1 L227.5,521.1 L227.5,525.9 L232.4,525.9 L232.4,523.5 L237.4,523.5 L237.4,526.5 L242.4,526.5 L242.4,526.5 L247.4,526.5 L247.4,519.9 L252.3,519.9 L252.3,521.1 L257.3,521.1 L257.3,524.7 L262.3,524.7 L262.3,517.5 L267.2,517.5 L267.2,523.1 L272.2,523.1 L272.2,523.1 L277.2,523.1 L277.2,522.3 L282.2,522.3 L282.2,522.3 L287.1,522.3 L287.1,516.9 L292.1,516.9 L292.1,519.9 L297.1,519.9 L297.1,519.1 L302.1,519.1 L302.1,522.3 L307.0,522.3 L307.0,522.3 L312.0,522.3 L312.0,524.3 L317.0,524.3 L317.0,525.5 L322.0,525.5 L322.0,523.5 L326.9,523.5 L326.9,519.1 L331.9,519.1 L331.9,527.1 L336.9,527.1 L336.9,517.5 L341.8,517.5 L341.8,519.9 L346.8,519.9 L346.8,519.9 L351.8,519.9 L351.8,519.1 L356.8,519.1 L356.8,525.5 L361.7,525.5 L361.7,515.7 L366.7,515.7 L366.7,519.9 L371.7,519.9 L371.7,525.5 L376.7,525.5 L376.7,518.7 L381.6,518.7 L381.6,524.1 L386.6,524.1 L386.6,521.7 L391.6,521.7 L391.6,567 Z" fill="#c8c8c8"/>
<rect x="1476" y="462" width="4" height="105" fill="#c8c8c8" />
<rect x="202.5" y="460" width="1.6" height="108" fill="#1a1a1a" />
<rect x="198" y="459.5" width="4" height="1.2" fill="#1a1a1a" />
<text x="198" y="464.9" font-family="Liberation Sans" font-size="14" fill="#1a1a1a" text-anchor="end" >360</text>
<rect x="198" y="486.5" width="4" height="1.2" fill="#1a1a1a" />
<text x="198" y="491.65" font-family="Liberation Sans" font-size="14" fill="#1a1a1a" text-anchor="end" >270</text>
<rect x="198" y="513.5" width="4" height="1.2" fill="#1a1a1a" />
<text x="198" y="518.4" font-family="Liberation Sans" font-size="14" fill="#1a1a1a" text-anchor="end" >180</text>
<rect x="198" y="539.5" width="4" height="1.2" fill="#1a1a1a" />
<text x="198" y="545.15" font-family="Liberation Sans" font-size="14" fill="#1a1a1a" text-anchor="end" >90</text>
<rect x="198" y="566.5" width="4" height="1.2" fill="#1a1a1a" />
<text x="198" y="571.9" font-family="Liberation Sans" font-size="14" fill="#1a1a1a" text-anchor="end" >0</text>
<rect x="203" y="566" width="1372" height="2" fill="#3a3a3a" />
<rect x="252.5" y="567" width="1.3" height="4" fill="#1a1a1a" />
<rect x="311.5" y="567" width="1.3" height="4" fill="#1a1a1a" />
<rect x="371.5" y="567" width="1.3" height="4" fill="#1a1a1a" />
<rect x="431.5" y="567" width="1.3" height="4" fill="#1a1a1a" />
<rect x="490.5" y="567" width="1.3" height="4" fill="#1a1a1a" />
<rect x="550.5" y="567" width="1.3" height="4" fill="#1a1a1a" />
<rect x="610.5" y="567" width="1.3" height="4" fill="#1a1a1a" />
<rect x="669.5" y="567" width="1.3" height="4" fill="#1a1a1a" />
<rect x="729.5" y="567" width="1.3" height="4" fill="#1a1a1a" />
<rect x="789.5" y="567" width="1.3" height="4" fill="#1a1a1a" />
<rect x="848.5" y="567" width="1.3" height="4" fill="#1a1a1a" />
<rect x="908.5" y="567" width="1.3" height="4" fill="#1a1a1a" />
<rect x="968.5" y="567" width="1.3" height="4" fill="#1a1a1a" />
<rect x="1027.5" y="567" width="1.3" height="4" fill="#1a1a1a" />
<rect x="1087.5" y="567" width="1.3" height="4" fill="#1a1a1a" />
<rect x="1147.5" y="567" width="1.3" height="4" fill="#1a1a1a" />
<rect x="1206.5" y="567" width="1.3" height="4" fill="#1a1a1a" />
<rect x="1266.5" y="567" width="1.3" height="4" fill="#1a1a1a" />
<rect x="1326.5" y="567" width="1.3" height="4" fill="#1a1a1a" />
<rect x="1386.5" y="567" width="1.3" height="4" fill="#1a1a1a" />
<rect x="1445.5" y="567" width="1.3" height="4" fill="#1a1a1a" />
<rect x="1505.5" y="567" width="1.3" height="4" fill="#1a1a1a" />
<rect x="1565.5" y="567" width="1.3" height="4" fill="#1a1a1a" />
<text x="97.5" y="643.5" font-family="Liberation Sans" font-size="14" fill="#1a1a1a" text-anchor="middle" >rMSSD(ms)</text>
<path d="M203,692 L203.0,639.0 L207.6,639.0 L207.6,639.0 L212.5,639.0 L212.5,642.1 L217.5,642.1 L217.5,643.3 L222.5,643.3 L222.5,639.0 L227.5,639.0 L227.5,643.3 L232.4,643.3 L232.4,642.3 L237.4,642.3 L237.4,645.3 L242.4,645.3 L242.4,645.3 L247.4,645.3 L247.4,640.9 L252.3,640.9 L252.3,640.9 L257.3,640.9 L257.3,642.1 L262.3,642.1 L262.3,637.9 L267.2,637.9 L267.2,642.1 L272.2,642.1 L272.2,643.3 L277.2,643.3 L277.2,640.9 L282.2,640.9 L282.2,643.3 L287.1,643.3 L287.1,635.8 L292.1,635.8 L292.1,637.9 L297.1,637.9 L297.1,639.0 L302.1,639.0 L302.1,642.1 L307.0,642.1 L307.0,642.1 L312.0,642.1 L312.0,644.5 L317.0,644.5 L317.0,646.1 L322.0,646.1 L322.0,640.9 L326.9,640.9 L326.9,637.0 L331.9,637.0 L331.9,646.1 L336.9,646.1 L336.9,639.9 L341.8,639.9 L341.8,639.0 L346.8,639.0 L346.8,639.0 L351.8,639.0 L351.8,639.0 L356.8,639.0 L356.8,645.3 L361.7,645.3 L361.7,634.9 L366.7,634.9 L366.7,639.0 L371.7,639.0 L371.7,645.3 L376.7,645.3 L376.7,637.9 L381.6,637.9 L381.6,644.5 L386.6,644.5 L386.6,642.1 L391.6,642.1 L391.6,692 Z" fill="#ff0000"/>
<rect x="1476" y="585" width="4" height="107" fill="#ff0000" />
<rect x="202.5" y="585" width="1.6" height="108" fill="#1a1a1a" />
<rect x="198" y="584.5" width="4" height="1.2" fill="#1a1a1a" />
<text x="198" y="589.9" font-family="Liberation Sans" font-size="14" fill="#1a1a1a" text-anchor="end" >400</text>
<rect x="198" y="611.5" width="4" height="1.2" fill="#1a1a1a" />
<text x="198" y="616.65" font-family="Liberation Sans" font-size="14" fill="#1a1a1a" text-anchor="end" >300</text>
<rect x="198" y="637.5" width="4" height="1.2" fill="#1a1a1a" />
<text x="198" y="643.4" font-family="Liberation Sans" font-size="14" fill="#1a1a1a" text-anchor="end" >200</text>
<rect x="198" y="664.5" width="4" height="1.2" fill="#1a1a1a" />
<text x="198" y="670.15" font-family="Liberation Sans" font-size="14" fill="#1a1a1a" text-anchor="end" >100</text>
<rect x="198" y="691.5" width="4" height="1.2" fill="#1a1a1a" />
<text x="198" y="696.9" font-family="Liberation Sans" font-size="14" fill="#1a1a1a" text-anchor="end" >0</text>
<rect x="203" y="691" width="1372" height="2" fill="#3a3a3a" />
<rect x="252.5" y="692" width="1.3" height="4" fill="#1a1a1a" />
<rect x="311.5" y="692" width="1.3" height="4" fill="#1a1a1a" />
<rect x="371.5" y="692" width="1.3" height="4" fill="#1a1a1a" />
<rect x="431.5" y="692" width="1.3" height="4" fill="#1a1a1a" />
<rect x="490.5" y="692" width="1.3" height="4" fill="#1a1a1a" />
<rect x="550.5" y="692" width="1.3" height="4" fill="#1a1a1a" />
<rect x="610.5" y="692" width="1.3" height="4" fill="#1a1a1a" />
<rect x="669.5" y="692" width="1.3" height="4" fill="#1a1a1a" />
<rect x="729.5" y="692" width="1.3" height="4" fill="#1a1a1a" />
<rect x="789.5" y="692" width="1.3" height="4" fill="#1a1a1a" />
<rect x="848.5" y="692" width="1.3" height="4" fill="#1a1a1a" />
<rect x="908.5" y="692" width="1.3" height="4" fill="#1a1a1a" />
<rect x="968.5" y="692" width="1.3" height="4" fill="#1a1a1a" />
<rect x="1027.5" y="692" width="1.3" height="4" fill="#1a1a1a" />
<rect x="1087.5" y="692" width="1.3" height="4" fill="#1a1a1a" />
<rect x="1147.5" y="692" width="1.3" height="4" fill="#1a1a1a" />
<rect x="1206.5" y="692" width="1.3" height="4" fill="#1a1a1a" />
<rect x="1266.5" y="692" width="1.3" height="4" fill="#1a1a1a" />
<rect x="1326.5" y="692" width="1.3" height="4" fill="#1a1a1a" />
<rect x="1386.5" y="692" width="1.3" height="4" fill="#1a1a1a" />
<rect x="1445.5" y="692" width="1.3" height="4" fill="#1a1a1a" />
<rect x="1505.5" y="692" width="1.3" height="4" fill="#1a1a1a" />
<rect x="1565.5" y="692" width="1.3" height="4" fill="#1a1a1a" />
<text x="96.7" y="768.5" font-family="Liberation Sans" font-size="14" fill="#1a1a1a" text-anchor="middle" >HR(bpm)</text>
<polyline points="204.0,714.8 205.0,715.4 206.0,716.6 207.0,713.9 208.0,714.9 209.0,718.2 210.0,717.5 211.0,716.6 212.0,716.6 213.0,716.1 214.0,716.8 215.0,717.1 216.0,718.1 217.0,715.9 218.0,717.7 219.0,717.9 220.0,717.3 221.0,717.9 222.0,714.2 223.0,714.8 224.0,715.7 225.0,715.1 226.0,715.5 227.0,716.4 228.0,717.8 229.0,717.9 230.0,718.2 231.0,714.5 232.0,718.0 233.0,716.3 234.0,714.7 235.0,716.3 236.0,714.1 237.0,718.2 238.0,717.3 239.0,714.5 240.0,717.2 241.0,714.0 242.0,714.0 243.0,715.3 244.0,718.1 245.0,718.2 246.0,714.1 247.0,713.9 248.0,715.6 249.0,717.5 250.0,715.2 251.0,717.7 252.0,715.8 253.0,716.6 254.0,716.3 255.0,717.9 256.0,715.7 257.0,714.8 258.0,718.1 259.0,719.2 260.0,718.1 261.0,715.5 262.0,714.4 263.0,715.3 264.0,717.8 265.0,715.0 266.0,716.4 267.0,713.9 268.0,716.6 269.0,716.4 270.0,714.6 271.0,717.5 272.0,717.3 273.0,717.4 274.0,716.8 275.0,716.0 276.0,715.0 277.0,716.8 278.0,714.2 279.0,718.0 280.0,714.8 281.0,718.0 282.0,717.1 283.0,716.3 284.0,714.3 285.0,715.2 286.0,716.3 287.0,715.3 288.0,714.2 289.0,716.4 290.0,716.1 291.0,715.8 292.0,715.1 293.0,714.0 294.0,714.7 295.0,717.5 296.0,716.0 297.0,718.1 298.0,713.9 299.0,717.1 300.0,718.0 301.0,717.7 302.0,717.6 303.0,714.3 304.0,714.0 305.0,716.1 306.0,717.7 307.0,714.0 308.0,714.3 309.0,717.9 310.0,714.0 311.0,714.3 312.0,718.1 313.0,717.4 314.0,714.8 315.0,717.7 316.0,714.9 317.0,717.7 318.0,717.9 319.0,716.3 320.0,717.1 321.0,716.5 322.0,714.0 323.0,717.4 324.0,714.2 325.0,714.1 326.0,717.6 327.0,716.0 328.0,715.2 329.0,716.6 330.0,715.4 331.0,715.2 332.0,716.2 333.0,715.5 334.0,714.6 335.0,716.5 336.0,715.5 337.0,716.5 338.0,715.4 339.0,716.9 340.0,716.9 341.0,714.9 342.0,716.9 343.0,715.7 344.0,717.7 345.0,715.4 346.0,717.3 347.0,715.8 348.0,717.4 349.0,717.7 350.0,716.7 351.0,716.3 352.0,713.4 353.0,714.8 354.0,716.1 355.0,716.7 356.0,717.4 357.0,714.6 358.0,716.8 359.0,718.0 360.0,714.3 361.0,714.3 362.0,717.9 363.0,715.2 364.0,717.4 365.0,714.6 366.0,716.5 367.0,715.5 368.0,715.5 369.0,715.6 370.0,716.0 371.0,715.6 372.0,714.5 373.0,717.1 374.0,716.1 375.0,716.6 376.0,714.5 377.0,717.1 378.0,716.1 379.0,717.0 380.0,715.0 381.0,716.4 382.0,714.8 383.0,718.0 384.0,716.9 385.0,717.6 386.0,715.0 387.0,713.9 388.0,715.5 389.0,715.4 390.0,717.2 391.0,718.2 392.0,716.4 393.0,717.5 394.0,716.3" fill="none" stroke="#ee0000" stroke-width="1.1"/>
<path d="M203.5,763 L203.5,716" stroke="#a03020" stroke-width="1.5"/>
<path d="M1534.7,744.5 L1534.7,779 M1533.7,780 L1533.7,817" stroke="#b07850" stroke-width="1.6"/>
<rect x="202.5" y="710" width="1.6" height="108" fill="#1a1a1a" />
<rect x="198" y="709.5" width="4" height="1.2" fill="#1a1a1a" />
<text x="198" y="714.9" font-family="Liberation Sans" font-size="14" fill="#1a1a1a" text-anchor="end" >80</text>
<rect x="198" y="736.5" width="4" height="1.2" fill="#1a1a1a" />
<text x="198" y="741.65" font-family="Liberation Sans" font-size="14" fill="#1a1a1a" text-anchor="end" >60</text>
<rect x="198" y="763.5" width="4" height="1.2" fill="#1a1a1a" />
<text x="198" y="768.4" font-family="Liberation Sans" font-size="14" fill="#1a1a1a" text-anchor="end" >40</text>
<rect x="198" y="789.5" width="4" height="1.2" fill="#1a1a1a" />
<text x="198" y="795.15" font-family="Liberation Sans" font-size="14" fill="#1a1a1a" text-anchor="end" >20</text>
<rect x="198" y="816.5" width="4" height="1.2" fill="#1a1a1a" />
<text x="198" y="821.9" font-family="Liberation Sans" font-size="14" fill="#1a1a1a" text-anchor="end" >0</text>
<path d="M203.3,763 L203.3,716" stroke="#8a2a1a" stroke-width="1.6"/>
<rect x="203" y="816" width="1372" height="2" fill="#3a3a3a" />
<rect x="252.5" y="817" width="1.3" height="4" fill="#1a1a1a" />
<rect x="311.5" y="817" width="1.3" height="4" fill="#1a1a1a" />
<rect x="371.5" y="817" width="1.3" height="4" fill="#1a1a1a" />
<rect x="431.5" y="817" width="1.3" height="4" fill="#1a1a1a" />
<rect x="490.5" y="817" width="1.3" height="4" fill="#1a1a1a" />
<rect x="550.5" y="817" width="1.3" height="4" fill="#1a1a1a" />
<rect x="610.5" y="817" width="1.3" height="4" fill="#1a1a1a" />
<rect x="669.5" y="817" width="1.3" height="4" fill="#1a1a1a" />
<rect x="729.5" y="817" width="1.3" height="4" fill="#1a1a1a" />
<rect x="789.5" y="817" width="1.3" height="4" fill="#1a1a1a" />
<rect x="848.5" y="817" width="1.3" height="4" fill="#1a1a1a" />
<rect x="908.5" y="817" width="1.3" height="4" fill="#1a1a1a" />
<rect x="968.5" y="817" width="1.3" height="4" fill="#1a1a1a" />
<rect x="1027.5" y="817" width="1.3" height="4" fill="#1a1a1a" />
<rect x="1087.5" y="817" width="1.3" height="4" fill="#1a1a1a" />
<rect x="1147.5" y="817" width="1.3" height="4" fill="#1a1a1a" />
<rect x="1206.5" y="817" width="1.3" height="4" fill="#1a1a1a" />
<rect x="1266.5" y="817" width="1.3" height="4" fill="#1a1a1a" />
<rect x="1326.5" y="817" width="1.3" height="4" fill="#1a1a1a" />
<rect x="1386.5" y="817" width="1.3" height="4" fill="#1a1a1a" />
<rect x="1445.5" y="817" width="1.3" height="4" fill="#1a1a1a" />
<rect x="1505.5" y="817" width="1.3" height="4" fill="#1a1a1a" />
<rect x="1565.5" y="817" width="1.3" height="4" fill="#1a1a1a" />
<rect x="1014.5" y="813" width="1.5" height="4" fill="#dd2222" />
<text x="252.6" y="843.3" font-family="Liberation Sans" font-size="14" fill="#1a1a1a" text-anchor="middle" >13</text>
<text x="312.28" y="843.3" font-family="Liberation Sans" font-size="14" fill="#1a1a1a" text-anchor="middle" >14</text>
<text x="371.96" y="843.3" font-family="Liberation Sans" font-size="14" fill="#1a1a1a" text-anchor="middle" >15</text>
<text x="431.64" y="843.3" font-family="Liberation Sans" font-size="14" fill="#1a1a1a" text-anchor="middle" >16</text>
<text x="491.32" y="843.3" font-family="Liberation Sans" font-size="14" fill="#1a1a1a" text-anchor="middle" >17</text>
<text x="551.0" y="843.3" font-family="Liberation Sans" font-size="14" fill="#1a1a1a" text-anchor="middle" >18</text>
<text x="610.68" y="843.3" font-family="Liberation Sans" font-size="14" fill="#1a1a1a" text-anchor="middle" >19</text>
<text x="670.36" y="843.3" font-family="Liberation Sans" font-size="14" fill="#1a1a1a" text-anchor="middle" >20</text>
<text x="730.04" y="843.3" font-family="Liberation Sans" font-size="14" fill="#1a1a1a" text-anchor="middle" >21</text>
<text x="789.72" y="843.3" font-family="Liberation Sans" font-size="14" fill="#1a1a1a" text-anchor="middle" >22</text>
<text x="849.4" y="843.3" font-family="Liberation Sans" font-size="14" fill="#1a1a1a" text-anchor="middle" >23</text>
<text x="909.08" y="843.3" font-family="Liberation Sans" font-size="14" fill="#1a1a1a" text-anchor="middle" >0</text>
<text x="968.76" y="843.3" font-family="Liberation Sans" font-size="14" fill="#1a1a1a" text-anchor="middle" >1</text>
<text x="1028.44" y="843.3" font-family="Liberation Sans" font-size="14" fill="#1a1a1a" text-anchor="middle" >2</text>
<text x="1088.12" y="843.3" font-family="Liberation Sans" font-size="14" fill="#1a1a1a" text-anchor="middle" >3</text>
<text x="1147.8" y="843.3" font-family="Liberation Sans" font-size="14" fill="#1a1a1a" text-anchor="middle" >4</text>
<text x="1207.48" y="843.3" font-family="Liberation Sans" font-size="14" fill="#1a1a1a" text-anchor="middle" >5</text>
<text x="1267.1599999999999" y="843.3" font-family="Liberation Sans" font-size="14" fill="#1a1a1a" text-anchor="middle" >6</text>
<text x="1326.84" y="843.3" font-family="Liberation Sans" font-size="14" fill="#1a1a1a" text-anchor="middle" >7</text>
<text x="1386.52" y="843.3" font-family="Liberation Sans" font-size="14" fill="#1a1a1a" text-anchor="middle" >8</text>
<text x="1446.1999999999998" y="843.3" font-family="Liberation Sans" font-size="14" fill="#1a1a1a" text-anchor="middle" >9</text>
<text x="1505.8799999999999" y="843.3" font-family="Liberation Sans" font-size="14" fill="#1a1a1a" text-anchor="middle" >10</text>
<text x="1565.56" y="843.3" font-family="Liberation Sans" font-size="14" fill="#1a1a1a" text-anchor="middle" >11</text>
<rect x="391" y="32" width="869" height="783" fill="#000" opacity="0.09" filter="url(#blur)"/>
<rect x="389" y="37" width="865" height="776" fill="#f0f0f0" />
<rect x="389" y="37" width="865" height="29" fill="#ffffff" />
<rect x="389.5" y="37.5" width="864" height="775" fill="none" stroke="#c4c4cc" stroke-width="1"/>
<rect x="389" y="37" width="865" height="1" fill="#8e8e8e" />
<rect x="1253" y="37" width="1" height="29" fill="#909090" />
<rect x="390" y="66" width="1" height="746" fill="#fafafe" />
<text x="394" y="56.3" font-family="Liberation Sans" font-size="14.6" fill="#8a8a8a" text-anchor="start" >Report editor</text>
<rect x="396" y="91" width="850" height="675" fill="#f0f0f0" />
<rect x="396" y="91" width="1" height="675" fill="#fdfdfd" />
<rect x="396" y="91" width="850" height="1" fill="#fdfdfd" />
<rect x="1244" y="91" width="2" height="675" fill="#6a6a6a" />
<rect x="396" y="764" width="850" height="2" fill="#6a6a6a" />
<rect x="480" y="72" width="109" height="20" fill="#f0f0f0" />
<rect x="480" y="72" width="1" height="20" fill="#fdfdfd" />
<rect x="480" y="72" width="109" height="1" fill="#fdfdfd" />
<rect x="587" y="72" width="2" height="20" fill="#6a6a6a" />
<rect x="589" y="72" width="96" height="20" fill="#f0f0f0" />
<rect x="589" y="72" width="96" height="1" fill="#fdfdfd" />
<rect x="683" y="72" width="2" height="20" fill="#6a6a6a" />
<rect x="397" y="69" width="83" height="24" fill="#f0f0f0" />
<rect x="397" y="69" width="1" height="23" fill="#fdfdfd" />
<rect x="397" y="69" width="83" height="1" fill="#fdfdfd" />
<rect x="478" y="69" width="2" height="23" fill="#6a6a6a" />
<text x="403.7" y="83.5" font-family="Liberation Serif" font-size="14.2" fill="#000" text-anchor="start"  stroke="#000" stroke-width="0.3">Main report</text>
<text x="485" y="85.5" font-family="Liberation Serif" font-size="14.2" fill="#000" text-anchor="start"  stroke="#000" stroke-width="0.3">Additional report</text>
<text x="596" y="85.5" font-family="Liberation Serif" font-size="14.2" fill="#000" text-anchor="start"  stroke="#000" stroke-width="0.3">Sleep duration</text>
<rect x="410.5" y="112.5" width="228" height="225" fill="none" stroke="#ffffff" stroke-width="1"/>
<rect x="409.5" y="111.5" width="228" height="225" fill="none" stroke="#a8a8b0" stroke-width="1"/>
<rect x="416.3" y="103" width="27.4" height="12" fill="#f0f0f0" />
<text x="421.3" y="116.2" font-family="Liberation Serif" font-size="14" fill="#000" text-anchor="start"  stroke="#000" stroke-width="0.3">HR</text>
<rect x="645.5" y="112.5" width="179" height="225" fill="none" stroke="#ffffff" stroke-width="1"/>
<rect x="644.5" y="111.5" width="179" height="225" fill="none" stroke="#a8a8b0" stroke-width="1"/>
<rect x="648.6" y="103" width="18.1" height="12" fill="#f0f0f0" />
<text x="653.6" y="116.2" font-family="Liberation Serif" font-size="14" fill="#000" text-anchor="start"  stroke="#000" stroke-width="0.3">V</text>
<rect x="829.5" y="112.5" width="178" height="225" fill="none" stroke="#ffffff" stroke-width="1"/>
<rect x="828.5" y="111.5" width="178" height="225" fill="none" stroke="#a8a8b0" stroke-width="1"/>
<rect x="833" y="103" width="15.8" height="12" fill="#f0f0f0" />
<text x="838" y="116.2" font-family="Liberation Serif" font-size="14" fill="#000" text-anchor="start"  stroke="#000" stroke-width="0.3">S</text>
<rect x="1014.5" y="112.5" width="216" height="601" fill="none" stroke="#ffffff" stroke-width="1"/>
<rect x="1013.5" y="111.5" width="216" height="601" fill="none" stroke="#a8a8b0" stroke-width="1"/>
<rect x="1020.8" y="103" width="76.7" height="12" fill="#f0f0f0" />
<text x="1025.8" y="116.2" font-family="Liberation Serif" font-size="14" fill="#000" text-anchor="start"  stroke="#000" stroke-width="0.3">ST Segment</text>
<rect x="410.5" y="355.5" width="228" height="149" fill="none" stroke="#ffffff" stroke-width="1"/>
<rect x="409.5" y="354.5" width="228" height="149" fill="none" stroke="#a8a8b0" stroke-width="1"/>
<rect x="412.5" y="346" width="16.6" height="12" fill="#f0f0f0" />
<text x="417.5" y="359.2" font-family="Liberation Serif" font-size="14" fill="#000" text-anchor="start"  stroke="#000" stroke-width="0.3">L</text>
<rect x="645.5" y="355.5" width="178" height="149" fill="none" stroke="#ffffff" stroke-width="1"/>
<rect x="644.5" y="354.5" width="178" height="149" fill="none" stroke="#a8a8b0" stroke-width="1"/>
<rect x="648.9" y="346" width="150.4" height="12" fill="#f0f0f0" />
<text transform="translate(653.9,359.2) scale(0.978,1)" x="0" y="0" font-family="Liberation Serif" font-size="14" fill="#000" text-anchor="start"  stroke="#000" stroke-width="0.3">HRV[Frequency Domain]</text>
<rect x="829.5" y="355.5" width="178" height="149" fill="none" stroke="#ffffff" stroke-width="1"/>
<rect x="828.5" y="354.5" width="178" height="149" fill="none" stroke="#a8a8b0" stroke-width="1"/>
<rect x="832.2" y="346" width="117.8" height="12" fill="#f0f0f0" />
<text transform="translate(837.2,359.2) scale(0.951,1)" x="0" y="0" font-family="Liberation Serif" font-size="14" fill="#000" text-anchor="start"  stroke="#000" stroke-width="0.3">HRV[Time Domain]</text>
<text x="414" y="140.0" font-family="Liberation Serif" font-size="14" fill="#000" text-anchor="start"  stroke="#000" stroke-width="0.3">Av. HR:</text>
<rect x="570" y="121" width="62" height="26" fill="#f9f9fc" />
<rect x="572" y="123" width="59" height="23" fill="#e2e2e2" />
<rect x="572" y="123" width="58" height="22" fill="#6e6e6e" />
<rect x="574" y="125" width="56" height="20" fill="#ffffff" />
<text transform="translate(577,139) scale(0.93,1)" x="0" y="0" font-family="Liberation Serif" font-size="14" fill="#000" text-anchor="start"  stroke="#000" stroke-width="0.3">77</text>
<text x="414" y="176.4" font-family="Liberation Serif" font-size="14" fill="#000" text-anchor="start"  stroke="#000" stroke-width="0.3">Min HR:</text>
<rect x="570" y="157" width="62" height="26" fill="#f9f9fc" />
<rect x="572" y="159" width="59" height="23" fill="#e2e2e2" />
<rect x="572" y="159" width="58" height="22" fill="#6e6e6e" />
<rect x="574" y="161" width="56" height="20" fill="#ffffff" />
<text transform="translate(577,175) scale(0.93,1)" x="0" y="0" font-family="Liberation Serif" font-size="14" fill="#000" text-anchor="start"  stroke="#000" stroke-width="0.3">62</text>
<text x="414" y="212.8" font-family="Liberation Serif" font-size="14" fill="#000" text-anchor="start"  stroke="#000" stroke-width="0.3">Max HR:</text>
<rect x="570" y="194" width="62" height="26" fill="#f9f9fc" />
<rect x="572" y="196" width="59" height="23" fill="#e2e2e2" />
<rect x="572" y="196" width="58" height="22" fill="#6e6e6e" />
<rect x="574" y="198" width="56" height="20" fill="#ffffff" />
<text transform="translate(577,212) scale(0.93,1)" x="0" y="0" font-family="Liberation Serif" font-size="14" fill="#000" text-anchor="start"  stroke="#000" stroke-width="0.3">80</text>
<text x="414" y="249.2" font-family="Liberation Serif" font-size="14" fill="#000" text-anchor="start"  stroke="#000" stroke-width="0.3">Total Beats:</text>
<rect x="570" y="230" width="62" height="26" fill="#f9f9fc" />
<rect x="572" y="232" width="59" height="23" fill="#e2e2e2" />
<rect x="572" y="232" width="58" height="22" fill="#6e6e6e" />
<rect x="574" y="234" width="56" height="20" fill="#ffffff" />
<text transform="translate(577,248) scale(0.93,1)" x="0" y="0" font-family="Liberation Serif" font-size="14" fill="#000" text-anchor="start"  stroke="#000" stroke-width="0.3">101457</text>
<text x="414" y="285.6" font-family="Liberation Serif" font-size="14" fill="#000" text-anchor="start"  stroke="#000" stroke-width="0.3">Abnormal Beats:</text>
<rect x="570" y="267" width="62" height="26" fill="#f9f9fc" />
<rect x="572" y="269" width="59" height="23" fill="#e2e2e2" />
<rect x="572" y="269" width="58" height="22" fill="#6e6e6e" />
<rect x="574" y="271" width="56" height="20" fill="#ffffff" />
<text transform="translate(577,285) scale(0.93,1)" x="0" y="0" font-family="Liberation Serif" font-size="14" fill="#000" text-anchor="start"  stroke="#000" stroke-width="0.3">12222</text>
<text x="414" y="322.0" font-family="Liberation Serif" font-size="14" fill="#000" text-anchor="start"  stroke="#000" stroke-width="0.3">Abnormal Permillage:</text>
<rect x="570" y="303" width="62" height="26" fill="#f9f9fc" />
<rect x="572" y="305" width="59" height="23" fill="#e2e2e2" />
<rect x="572" y="305" width="58" height="22" fill="#6e6e6e" />
<rect x="574" y="307" width="56" height="20" fill="#ffffff" />
<text transform="translate(577,321) scale(0.93,1)" x="0" y="0" font-family="Liberation Serif" font-size="14" fill="#000" text-anchor="start"  stroke="#000" stroke-width="0.3">120</text>
<text x="649.2" y="140.3" font-family="Liberation Serif" font-size="14" fill="#000" text-anchor="start"  stroke="#000" stroke-width="0.3">Total Beats:</text>
<rect x="755" y="121" width="62" height="26" fill="#f9f9fc" />
<rect x="757" y="123" width="59" height="23" fill="#e2e2e2" />
<rect x="757" y="123" width="58" height="22" fill="#6e6e6e" />
<rect x="759" y="125" width="56" height="20" fill="#ffffff" />
<text transform="translate(762,139) scale(0.93,1)" x="0" y="0" font-family="Liberation Serif" font-size="14" fill="#000" text-anchor="start"  stroke="#000" stroke-width="0.3">0</text>
<text x="834.1" y="140.3" font-family="Liberation Serif" font-size="14" fill="#000" text-anchor="start"  stroke="#000" stroke-width="0.3">Total Beats:</text>
<rect x="939" y="121" width="62" height="26" fill="#f9f9fc" />
<rect x="941" y="123" width="59" height="23" fill="#e2e2e2" />
<rect x="941" y="123" width="58" height="22" fill="#6e6e6e" />
<rect x="943" y="125" width="56" height="20" fill="#ffffff" />
<text transform="translate(946,139) scale(0.93,1)" x="0" y="0" font-family="Liberation Serif" font-size="14" fill="#000" text-anchor="start"  stroke="#000" stroke-width="0.3">12219</text>
<text x="649.2" y="166.64" font-family="Liberation Serif" font-size="14" fill="#000" text-anchor="start"  stroke="#000" stroke-width="0.3">Pair:</text>
<rect x="755" y="148" width="62" height="26" fill="#f9f9fc" />
<rect x="757" y="150" width="59" height="23" fill="#e2e2e2" />
<rect x="757" y="150" width="58" height="22" fill="#6e6e6e" />
<rect x="759" y="152" width="56" height="20" fill="#ffffff" />
<text transform="translate(762,166) scale(0.93,1)" x="0" y="0" font-family="Liberation Serif" font-size="14" fill="#000" text-anchor="start"  stroke="#000" stroke-width="0.3">0</text>
<text x="834.1" y="166.64" font-family="Liberation Serif" font-size="14" fill="#000" text-anchor="start"  stroke="#000" stroke-width="0.3">Pair:</text>
<rect x="939" y="148" width="62" height="26" fill="#f9f9fc" />
<rect x="941" y="150" width="59" height="23" fill="#e2e2e2" />
<rect x="941" y="150" width="58" height="22" fill="#6e6e6e" />
<rect x="943" y="152" width="56" height="20" fill="#ffffff" />
<text transform="translate(946,166) scale(0.93,1)" x="0" y="0" font-family="Liberation Serif" font-size="14" fill="#000" text-anchor="start"  stroke="#000" stroke-width="0.3">565</text>
<text x="649.2" y="192.98" font-family="Liberation Serif" font-size="14" fill="#000" text-anchor="start"  stroke="#000" stroke-width="0.3">Short run:</text>
<rect x="755" y="174" width="62" height="26" fill="#f9f9fc" />
<rect x="757" y="176" width="59" height="23" fill="#e2e2e2" />
<rect x="757" y="176" width="58" height="22" fill="#6e6e6e" />
<rect x="759" y="178" width="56" height="20" fill="#ffffff" />
<text transform="translate(762,192) scale(0.93,1)" x="0" y="0" font-family="Liberation Serif" font-size="14" fill="#000" text-anchor="start"  stroke="#000" stroke-width="0.3">0</text>
<text x="834.1" y="192.98" font-family="Liberation Serif" font-size="14" fill="#000" text-anchor="start"  stroke="#000" stroke-width="0.3">Short run:</text>
<rect x="939" y="174" width="62" height="26" fill="#f9f9fc" />
<rect x="941" y="176" width="59" height="23" fill="#e2e2e2" />
<rect x="941" y="176" width="58" height="22" fill="#6e6e6e" />
<rect x="943" y="178" width="56" height="20" fill="#ffffff" />
<text transform="translate(946,192) scale(0.93,1)" x="0" y="0" font-family="Liberation Serif" font-size="14" fill="#000" text-anchor="start"  stroke="#000" stroke-width="0.3">401</text>
<text x="649.2" y="219.32" font-family="Liberation Serif" font-size="14" fill="#000" text-anchor="start"  stroke="#000" stroke-width="0.3">Long run:</text>
<rect x="755" y="200" width="62" height="26" fill="#f9f9fc" />
<rect x="757" y="202" width="59" height="23" fill="#e2e2e2" />
<rect x="757" y="202" width="58" height="22" fill="#6e6e6e" />
<rect x="759" y="204" width="56" height="20" fill="#ffffff" />
<text transform="translate(762,218) scale(0.93,1)" x="0" y="0" font-family="Liberation Serif" font-size="14" fill="#000" text-anchor="start"  stroke="#000" stroke-width="0.3">0</text>
<text x="834.1" y="219.32" font-family="Liberation Serif" font-size="14" fill="#000" text-anchor="start"  stroke="#000" stroke-width="0.3">Long run:</text>
<rect x="939" y="200" width="62" height="26" fill="#f9f9fc" />
<rect x="941" y="202" width="59" height="23" fill="#e2e2e2" />
<rect x="941" y="202" width="58" height="22" fill="#6e6e6e" />
<rect x="943" y="204" width="56" height="20" fill="#ffffff" />
<text transform="translate(946,218) scale(0.93,1)" x="0" y="0" font-family="Liberation Serif" font-size="14" fill="#000" text-anchor="start"  stroke="#000" stroke-width="0.3">16</text>
<text x="649.2" y="245.66" font-family="Liberation Serif" font-size="14" fill="#000" text-anchor="start"  stroke="#000" stroke-width="0.3">Permillage:</text>
<rect x="755" y="227" width="62" height="26" fill="#f9f9fc" />
<rect x="757" y="229" width="59" height="23" fill="#e2e2e2" />
<rect x="757" y="229" width="58" height="22" fill="#6e6e6e" />
<rect x="759" y="231" width="56" height="20" fill="#ffffff" />
<text transform="translate(762,245) scale(0.93,1)" x="0" y="0" font-family="Liberation Serif" font-size="14" fill="#000" text-anchor="start"  stroke="#000" stroke-width="0.3">0</text>
<text x="834.1" y="245.66" font-family="Liberation Serif" font-size="14" fill="#000" text-anchor="start"  stroke="#000" stroke-width="0.3">Permillage:</text>
<rect x="939" y="227" width="62" height="26" fill="#f9f9fc" />
<rect x="941" y="229" width="59" height="23" fill="#e2e2e2" />
<rect x="941" y="229" width="58" height="22" fill="#6e6e6e" />
<rect x="943" y="231" width="56" height="20" fill="#ffffff" />
<text transform="translate(946,245) scale(0.93,1)" x="0" y="0" font-family="Liberation Serif" font-size="14" fill="#000" text-anchor="start"  stroke="#000" stroke-width="0.3">120</text>
<text x="649.2" y="272.0" font-family="Liberation Serif" font-size="14" fill="#000" text-anchor="start"  stroke="#000" stroke-width="0.3">Bigeminy:</text>
<rect x="755" y="253" width="62" height="26" fill="#f9f9fc" />
<rect x="757" y="255" width="59" height="23" fill="#e2e2e2" />
<rect x="757" y="255" width="58" height="22" fill="#6e6e6e" />
<rect x="759" y="257" width="56" height="20" fill="#ffffff" />
<text transform="translate(762,271) scale(0.93,1)" x="0" y="0" font-family="Liberation Serif" font-size="14" fill="#000" text-anchor="start"  stroke="#000" stroke-width="0.3">0</text>
<text x="834.1" y="272.0" font-family="Liberation Serif" font-size="14" fill="#000" text-anchor="start"  stroke="#000" stroke-width="0.3">Bigeminy:</text>
<rect x="939" y="253" width="62" height="26" fill="#f9f9fc" />
<rect x="941" y="255" width="59" height="23" fill="#e2e2e2" />
<rect x="941" y="255" width="58" height="22" fill="#6e6e6e" />
<rect x="943" y="257" width="56" height="20" fill="#ffffff" />
<text transform="translate(946,271) scale(0.93,1)" x="0" y="0" font-family="Liberation Serif" font-size="14" fill="#000" text-anchor="start"  stroke="#000" stroke-width="0.3">409</text>
<text x="649.2" y="298.34" font-family="Liberation Serif" font-size="14" fill="#000" text-anchor="start"  stroke="#000" stroke-width="0.3">Trigeminy:</text>
<rect x="755" y="279" width="62" height="26" fill="#f9f9fc" />
<rect x="757" y="281" width="59" height="23" fill="#e2e2e2" />
<rect x="757" y="281" width="58" height="22" fill="#6e6e6e" />
<rect x="759" y="283" width="56" height="20" fill="#ffffff" />
<text transform="translate(762,297) scale(0.93,1)" x="0" y="0" font-family="Liberation Serif" font-size="14" fill="#000" text-anchor="start"  stroke="#000" stroke-width="0.3">0</text>
<text x="834.1" y="298.34" font-family="Liberation Serif" font-size="14" fill="#000" text-anchor="start"  stroke="#000" stroke-width="0.3">Trigeminy:</text>
<rect x="939" y="279" width="62" height="26" fill="#f9f9fc" />
<rect x="941" y="281" width="59" height="23" fill="#e2e2e2" />
<rect x="941" y="281" width="58" height="22" fill="#6e6e6e" />
<rect x="943" y="283" width="56" height="20" fill="#ffffff" />
<text transform="translate(946,297) scale(0.93,1)" x="0" y="0" font-family="Liberation Serif" font-size="14" fill="#000" text-anchor="start"  stroke="#000" stroke-width="0.3">34</text>
<text transform="translate(649.2,324.68) scale(0.934,1)" x="0" y="0" font-family="Liberation Serif" font-size="14" fill="#000" text-anchor="start"  stroke="#000" stroke-width="0.3">Max. V in 1 min:</text>
<rect x="755" y="306" width="62" height="26" fill="#f9f9fc" />
<rect x="757" y="308" width="59" height="23" fill="#e2e2e2" />
<rect x="757" y="308" width="58" height="22" fill="#6e6e6e" />
<rect x="759" y="310" width="56" height="20" fill="#ffffff" />
<text transform="translate(762,324) scale(0.93,1)" x="0" y="0" font-family="Liberation Serif" font-size="14" fill="#000" text-anchor="start"  stroke="#000" stroke-width="0.3">0</text>
<text transform="translate(834.1,324.68) scale(0.934,1)" x="0" y="0" font-family="Liberation Serif" font-size="14" fill="#000" text-anchor="start"  stroke="#000" stroke-width="0.3">Max. S in 1 min:</text>
<rect x="939" y="306" width="62" height="26" fill="#f9f9fc" />
<rect x="941" y="308" width="59" height="23" fill="#e2e2e2" />
<rect x="941" y="308" width="58" height="22" fill="#6e6e6e" />
<rect x="943" y="310" width="56" height="20" fill="#ffffff" />
<text transform="translate(946,324) scale(0.93,1)" x="0" y="0" font-family="Liberation Serif" font-size="14" fill="#000" text-anchor="start"  stroke="#000" stroke-width="0.3">33</text>
<text transform="translate(415,382.4) scale(0.94,1)" x="0" y="0" font-family="Liberation Serif" font-size="14" fill="#000" text-anchor="start"  stroke="#000" stroke-width="0.3">R-R &gt; 2000 ms:</text>
<rect x="570" y="368" width="62" height="26" fill="#f9f9fc" />
<rect x="572" y="370" width="59" height="23" fill="#e2e2e2" />
<rect x="572" y="370" width="58" height="22" fill="#6e6e6e" />
<rect x="574" y="372" width="56" height="20" fill="#ffffff" />
<text transform="translate(577,386) scale(0.93,1)" x="0" y="0" font-family="Liberation Serif" font-size="14" fill="#000" text-anchor="start"  stroke="#000" stroke-width="0.3">3</text>
<text x="413.2" y="439.5" font-family="Liberation Serif" font-size="14" fill="#000" text-anchor="start"  stroke="#000" stroke-width="0.3">Longest( ms ):</text>
<rect x="570" y="420" width="62" height="26" fill="#f9f9fc" />
<rect x="572" y="422" width="59" height="23" fill="#e2e2e2" />
<rect x="572" y="422" width="58" height="22" fill="#6e6e6e" />
<rect x="574" y="424" width="56" height="20" fill="#ffffff" />
<text transform="translate(577,438) scale(0.93,1)" x="0" y="0" font-family="Liberation Serif" font-size="14" fill="#000" text-anchor="start"  stroke="#000" stroke-width="0.3">18245</text>
<text x="413.9" y="491.6" font-family="Liberation Serif" font-size="14" fill="#000" text-anchor="start"  stroke="#000" stroke-width="0.3">Time:</text>
<rect x="570" y="473" width="62" height="26" fill="#f9f9fc" />
<rect x="572" y="475" width="59" height="23" fill="#e2e2e2" />
<rect x="572" y="475" width="58" height="22" fill="#6e6e6e" />
<rect x="574" y="477" width="56" height="20" fill="#ffffff" />
<text transform="translate(577,491) scale(0.93,1)" x="0" y="0" font-family="Liberation Serif" font-size="14" fill="#000" text-anchor="start"  stroke="#000" stroke-width="0.3">09:34:25</text>
<text x="649.1" y="386.8" font-family="Liberation Serif" font-size="14" fill="#000" text-anchor="start"  stroke="#000" stroke-width="0.3">Power:</text>
<rect x="755" y="368" width="62" height="26" fill="#f9f9fc" />
<rect x="757" y="370" width="59" height="23" fill="#e2e2e2" />
<rect x="757" y="370" width="58" height="22" fill="#6e6e6e" />
<rect x="759" y="372" width="56" height="20" fill="#ffffff" />
<text transform="translate(762,386) scale(0.93,1)" x="0" y="0" font-family="Liberation Serif" font-size="14" fill="#000" text-anchor="start"  stroke="#000" stroke-width="0.3">3048</text>
<text x="834.1" y="386.8" font-family="Liberation Serif" font-size="14" fill="#000" text-anchor="start"  stroke="#000" stroke-width="0.3">SDNN:</text>
<rect x="939" y="368" width="62" height="26" fill="#f9f9fc" />
<rect x="941" y="370" width="59" height="23" fill="#e2e2e2" />
<rect x="941" y="370" width="58" height="22" fill="#6e6e6e" />
<rect x="943" y="372" width="56" height="20" fill="#ffffff" />
<text transform="translate(946,386) scale(0.93,1)" x="0" y="0" font-family="Liberation Serif" font-size="14" fill="#000" text-anchor="start"  stroke="#000" stroke-width="0.3">83.9</text>
<text x="649.1" y="413.25" font-family="Liberation Serif" font-size="14" fill="#000" text-anchor="start"  stroke="#000" stroke-width="0.3">ULF:</text>
<rect x="755" y="394" width="62" height="26" fill="#f9f9fc" />
<rect x="757" y="396" width="59" height="23" fill="#e2e2e2" />
<rect x="757" y="396" width="58" height="22" fill="#6e6e6e" />
<rect x="759" y="398" width="56" height="20" fill="#ffffff" />
<text transform="translate(762,412) scale(0.93,1)" x="0" y="0" font-family="Liberation Serif" font-size="14" fill="#000" text-anchor="start"  stroke="#000" stroke-width="0.3">683.5</text>
<text x="834.1" y="413.25" font-family="Liberation Serif" font-size="14" fill="#000" text-anchor="start"  stroke="#000" stroke-width="0.3">SDANN:</text>
<rect x="939" y="394" width="62" height="26" fill="#f9f9fc" />
<rect x="941" y="396" width="59" height="23" fill="#e2e2e2" />
<rect x="941" y="396" width="58" height="22" fill="#6e6e6e" />
<rect x="943" y="398" width="56" height="20" fill="#ffffff" />
<text transform="translate(946,412) scale(0.93,1)" x="0" y="0" font-family="Liberation Serif" font-size="14" fill="#000" text-anchor="start"  stroke="#000" stroke-width="0.3">392</text>
<text x="649.1" y="439.7" font-family="Liberation Serif" font-size="14" fill="#000" text-anchor="start"  stroke="#000" stroke-width="0.3">VLF:</text>
<rect x="755" y="421" width="62" height="26" fill="#f9f9fc" />
<rect x="757" y="423" width="59" height="23" fill="#e2e2e2" />
<rect x="757" y="423" width="58" height="22" fill="#6e6e6e" />
<rect x="759" y="425" width="56" height="20" fill="#ffffff" />
<text transform="translate(762,439) scale(0.93,1)" x="0" y="0" font-family="Liberation Serif" font-size="14" fill="#000" text-anchor="start"  stroke="#000" stroke-width="0.3">1131.4</text>
<text x="834.1" y="439.7" font-family="Liberation Serif" font-size="14" fill="#000" text-anchor="start"  stroke="#000" stroke-width="0.3">rMSSD:</text>
<rect x="939" y="421" width="62" height="26" fill="#f9f9fc" />
<rect x="941" y="423" width="59" height="23" fill="#e2e2e2" />
<rect x="941" y="423" width="58" height="22" fill="#6e6e6e" />
<rect x="943" y="425" width="56" height="20" fill="#ffffff" />
<text transform="translate(946,439) scale(0.93,1)" x="0" y="0" font-family="Liberation Serif" font-size="14" fill="#000" text-anchor="start"  stroke="#000" stroke-width="0.3">98.9</text>
<text x="649.1" y="466.15" font-family="Liberation Serif" font-size="14" fill="#000" text-anchor="start"  stroke="#000" stroke-width="0.3">LF:</text>
<rect x="755" y="447" width="62" height="26" fill="#f9f9fc" />
<rect x="757" y="449" width="59" height="23" fill="#e2e2e2" />
<rect x="757" y="449" width="58" height="22" fill="#6e6e6e" />
<rect x="759" y="451" width="56" height="20" fill="#ffffff" />
<text transform="translate(762,465) scale(0.93,1)" x="0" y="0" font-family="Liberation Serif" font-size="14" fill="#000" text-anchor="start"  stroke="#000" stroke-width="0.3">434.4</text>
<text x="834.1" y="466.15" font-family="Liberation Serif" font-size="14" fill="#000" text-anchor="start"  stroke="#000" stroke-width="0.3">PNN50:</text>
<rect x="939" y="447" width="62" height="26" fill="#f9f9fc" />
<rect x="941" y="449" width="59" height="23" fill="#e2e2e2" />
<rect x="941" y="449" width="58" height="22" fill="#6e6e6e" />
<rect x="943" y="451" width="56" height="20" fill="#ffffff" />
<text transform="translate(946,465) scale(0.93,1)" x="0" y="0" font-family="Liberation Serif" font-size="14" fill="#000" text-anchor="start"  stroke="#000" stroke-width="0.3">21</text>
<text x="649.1" y="492.6" font-family="Liberation Serif" font-size="14" fill="#000" text-anchor="start"  stroke="#000" stroke-width="0.3">HF:</text>
<rect x="755" y="474" width="62" height="26" fill="#f9f9fc" />
<rect x="757" y="476" width="59" height="23" fill="#e2e2e2" />
<rect x="757" y="476" width="58" height="22" fill="#6e6e6e" />
<rect x="759" y="478" width="56" height="20" fill="#ffffff" />
<text transform="translate(762,492) scale(0.93,1)" x="0" y="0" font-family="Liberation Serif" font-size="14" fill="#000" text-anchor="start"  stroke="#000" stroke-width="0.3">798.4</text>
<text x="834.1" y="492.6" font-family="Liberation Serif" font-size="14" fill="#000" text-anchor="start"  stroke="#000" stroke-width="0.3">CV:</text>
<rect x="939" y="474" width="62" height="26" fill="#f9f9fc" />
<rect x="941" y="476" width="59" height="23" fill="#e2e2e2" />
<rect x="941" y="476" width="58" height="22" fill="#6e6e6e" />
<rect x="943" y="478" width="56" height="20" fill="#ffffff" />
<text transform="translate(946,492) scale(0.93,1)" x="0" y="0" font-family="Liberation Serif" font-size="14" fill="#000" text-anchor="start"  stroke="#000" stroke-width="0.3">0.04</text>
<text x="1076.2" y="141.5" font-family="Liberation Serif" font-size="14" fill="#000" text-anchor="start"  stroke="#000" stroke-width="0.3">Elevation</text>
<text x="1154.8" y="141.5" font-family="Liberation Serif" font-size="14" fill="#000" text-anchor="start"  stroke="#000" stroke-width="0.3">Depression</text>
<text x="1022.5" y="181.0" font-family="Liberation Serif" font-size="14" fill="#000" text-anchor="start"  stroke="#000" stroke-width="0.3">I</text>
<rect x="1066" y="162" width="74" height="26" fill="#f9f9fc" />
<rect x="1068" y="164" width="71" height="23" fill="#e2e2e2" />
<rect x="1068" y="164" width="70" height="22" fill="#6e6e6e" />
<rect x="1070" y="166" width="68" height="20" fill="#ffffff" />
<text transform="translate(1073,180) scale(0.93,1)" x="0" y="0" font-family="Liberation Serif" font-size="14" fill="#000" text-anchor="start"  stroke="#000" stroke-width="0.3">0</text>
<rect x="1150" y="162" width="74" height="26" fill="#f9f9fc" />
<rect x="1152" y="164" width="71" height="23" fill="#e2e2e2" />
<rect x="1152" y="164" width="70" height="22" fill="#6e6e6e" />
<rect x="1154" y="166" width="68" height="20" fill="#ffffff" />
<text transform="translate(1157,180) scale(0.93,1)" x="0" y="0" font-family="Liberation Serif" font-size="14" fill="#000" text-anchor="start"  stroke="#000" stroke-width="0.3">0</text>
<text x="1022.5" y="227.2" font-family="Liberation Serif" font-size="14" fill="#000" text-anchor="start"  stroke="#000" stroke-width="0.3">II</text>
<rect x="1066" y="209" width="74" height="26" fill="#f9f9fc" />
<rect x="1068" y="211" width="71" height="23" fill="#e2e2e2" />
<rect x="1068" y="211" width="70" height="22" fill="#6e6e6e" />
<rect x="1070" y="213" width="68" height="20" fill="#ffffff" />
<text transform="translate(1073,227) scale(0.93,1)" x="0" y="0" font-family="Liberation Serif" font-size="14" fill="#000" text-anchor="start"  stroke="#000" stroke-width="0.3">0</text>
<rect x="1150" y="209" width="74" height="26" fill="#f9f9fc" />
<rect x="1152" y="211" width="71" height="23" fill="#e2e2e2" />
<rect x="1152" y="211" width="70" height="22" fill="#6e6e6e" />
<rect x="1154" y="213" width="68" height="20" fill="#ffffff" />
<text transform="translate(1157,227) scale(0.93,1)" x="0" y="0" font-family="Liberation Serif" font-size="14" fill="#000" text-anchor="start"  stroke="#000" stroke-width="0.3">0</text>
<text x="1022.5" y="273.4" font-family="Liberation Serif" font-size="14" fill="#000" text-anchor="start"  stroke="#000" stroke-width="0.3">III</text>
<rect x="1066" y="255" width="74" height="26" fill="#f9f9fc" />
<rect x="1068" y="257" width="71" height="23" fill="#e2e2e2" />
<rect x="1068" y="257" width="70" height="22" fill="#6e6e6e" />
<rect x="1070" y="259" width="68" height="20" fill="#ffffff" />
<text transform="translate(1073,273) scale(0.93,1)" x="0" y="0" font-family="Liberation Serif" font-size="14" fill="#000" text-anchor="start"  stroke="#000" stroke-width="0.3">0</text>
<rect x="1150" y="255" width="74" height="26" fill="#f9f9fc" />
<rect x="1152" y="257" width="71" height="23" fill="#e2e2e2" />
<rect x="1152" y="257" width="70" height="22" fill="#6e6e6e" />
<rect x="1154" y="259" width="68" height="20" fill="#ffffff" />
<text transform="translate(1157,273) scale(0.93,1)" x="0" y="0" font-family="Liberation Serif" font-size="14" fill="#000" text-anchor="start"  stroke="#000" stroke-width="0.3">0</text>
<text x="1022.5" y="319.6" font-family="Liberation Serif" font-size="14" fill="#000" text-anchor="start"  stroke="#000" stroke-width="0.3">aVR</text>
<rect x="1066" y="301" width="74" height="26" fill="#f9f9fc" />
<rect x="1068" y="303" width="71" height="23" fill="#e2e2e2" />
<rect x="1068" y="303" width="70" height="22" fill="#6e6e6e" />
<rect x="1070" y="305" width="68" height="20" fill="#ffffff" />
<text transform="translate(1073,319) scale(0.93,1)" x="0" y="0" font-family="Liberation Serif" font-size="14" fill="#000" text-anchor="start"  stroke="#000" stroke-width="0.3">0</text>
<rect x="1150" y="301" width="74" height="26" fill="#f9f9fc" />
<rect x="1152" y="303" width="71" height="23" fill="#e2e2e2" />
<rect x="1152" y="303" width="70" height="22" fill="#6e6e6e" />
<rect x="1154" y="305" width="68" height="20" fill="#ffffff" />
<text transform="translate(1157,319) scale(0.93,1)" x="0" y="0" font-family="Liberation Serif" font-size="14" fill="#000" text-anchor="start"  stroke="#000" stroke-width="0.3">0</text>
<text x="1022.5" y="365.8" font-family="Liberation Serif" font-size="14" fill="#000" text-anchor="start"  stroke="#000" stroke-width="0.3">aVL</text>
<rect x="1066" y="347" width="74" height="26" fill="#f9f9fc" />
<rect x="1068" y="349" width="71" height="23" fill="#e2e2e2" />
<rect x="1068" y="349" width="70" height="22" fill="#6e6e6e" />
<rect x="1070" y="351" width="68" height="20" fill="#ffffff" />
<text transform="translate(1073,365) scale(0.93,1)" x="0" y="0" font-family="Liberation Serif" font-size="14" fill="#000" text-anchor="start"  stroke="#000" stroke-width="0.3">0</text>
<rect x="1150" y="347" width="74" height="26" fill="#f9f9fc" />
<rect x="1152" y="349" width="71" height="23" fill="#e2e2e2" />
<rect x="1152" y="349" width="70" height="22" fill="#6e6e6e" />
<rect x="1154" y="351" width="68" height="20" fill="#ffffff" />
<text transform="translate(1157,365) scale(0.93,1)" x="0" y="0" font-family="Liberation Serif" font-size="14" fill="#000" text-anchor="start"  stroke="#000" stroke-width="0.3">0</text>
<text x="1022.5" y="412.0" font-family="Liberation Serif" font-size="14" fill="#000" text-anchor="start"  stroke="#000" stroke-width="0.3">aVF</text>
<rect x="1066" y="394" width="74" height="26" fill="#f9f9fc" />
<rect x="1068" y="396" width="71" height="23" fill="#e2e2e2" />
<rect x="1068" y="396" width="70" height="22" fill="#6e6e6e" />
<rect x="1070" y="398" width="68" height="20" fill="#ffffff" />
<text transform="translate(1073,412) scale(0.93,1)" x="0" y="0" font-family="Liberation Serif" font-size="14" fill="#000" text-anchor="start"  stroke="#000" stroke-width="0.3">0</text>
<rect x="1150" y="394" width="74" height="26" fill="#f9f9fc" />
<rect x="1152" y="396" width="71" height="23" fill="#e2e2e2" />
<rect x="1152" y="396" width="70" height="22" fill="#6e6e6e" />
<rect x="1154" y="398" width="68" height="20" fill="#ffffff" />
<text transform="translate(1157,412) scale(0.93,1)" x="0" y="0" font-family="Liberation Serif" font-size="14" fill="#000" text-anchor="start"  stroke="#000" stroke-width="0.3">0</text>
<text x="1022.5" y="458.20000000000005" font-family="Liberation Serif" font-size="14" fill="#000" text-anchor="start"  stroke="#000" stroke-width="0.3">V1</text>
<rect x="1066" y="440" width="74" height="26" fill="#f9f9fc" />
<rect x="1068" y="442" width="71" height="23" fill="#e2e2e2" />
<rect x="1068" y="442" width="70" height="22" fill="#6e6e6e" />
<rect x="1070" y="444" width="68" height="20" fill="#ffffff" />
<text transform="translate(1073,458) scale(0.93,1)" x="0" y="0" font-family="Liberation Serif" font-size="14" fill="#000" text-anchor="start"  stroke="#000" stroke-width="0.3">0</text>
<rect x="1150" y="440" width="74" height="26" fill="#f9f9fc" />
<rect x="1152" y="442" width="71" height="23" fill="#e2e2e2" />
<rect x="1152" y="442" width="70" height="22" fill="#6e6e6e" />
<rect x="1154" y="444" width="68" height="20" fill="#ffffff" />
<text transform="translate(1157,458) scale(0.93,1)" x="0" y="0" font-family="Liberation Serif" font-size="14" fill="#000" text-anchor="start"  stroke="#000" stroke-width="0.3">0</text>
<text x="1022.5" y="504.40000000000003" font-family="Liberation Serif" font-size="14" fill="#000" text-anchor="start"  stroke="#000" stroke-width="0.3">V2</text>
<rect x="1066" y="486" width="74" height="26" fill="#f9f9fc" />
<rect x="1068" y="488" width="71" height="23" fill="#e2e2e2" />
<rect x="1068" y="488" width="70" height="22" fill="#6e6e6e" />
<rect x="1070" y="490" width="68" height="20" fill="#ffffff" />
<text transform="translate(1073,504) scale(0.93,1)" x="0" y="0" font-family="Liberation Serif" font-size="14" fill="#000" text-anchor="start"  stroke="#000" stroke-width="0.3">0</text>
<rect x="1150" y="486" width="74" height="26" fill="#f9f9fc" />
<rect x="1152" y="488" width="71" height="23" fill="#e2e2e2" />
<rect x="1152" y="488" width="70" height="22" fill="#6e6e6e" />
<rect x="1154" y="490" width="68" height="20" fill="#ffffff" />
<text transform="translate(1157,504) scale(0.93,1)" x="0" y="0" font-family="Liberation Serif" font-size="14" fill="#000" text-anchor="start"  stroke="#000" stroke-width="0.3">0</text>
<text x="1022.5" y="550.6" font-family="Liberation Serif" font-size="14" fill="#000" text-anchor="start"  stroke="#000" stroke-width="0.3">V3</text>
<rect x="1066" y="532" width="74" height="26" fill="#f9f9fc" />
<rect x="1068" y="534" width="71" height="23" fill="#e2e2e2" />
<rect x="1068" y="534" width="70" height="22" fill="#6e6e6e" />
<rect x="1070" y="536" width="68" height="20" fill="#ffffff" />
<text transform="translate(1073,550) scale(0.93,1)" x="0" y="0" font-family="Liberation Serif" font-size="14" fill="#000" text-anchor="start"  stroke="#000" stroke-width="0.3">0</text>
<rect x="1150" y="532" width="74" height="26" fill="#f9f9fc" />
<rect x="1152" y="534" width="71" height="23" fill="#e2e2e2" />
<rect x="1152" y="534" width="70" height="22" fill="#6e6e6e" />
<rect x="1154" y="536" width="68" height="20" fill="#ffffff" />
<text transform="translate(1157,550) scale(0.93,1)" x="0" y="0" font-family="Liberation Serif" font-size="14" fill="#000" text-anchor="start"  stroke="#000" stroke-width="0.3">0</text>
<text x="1022.5" y="596.8" font-family="Liberation Serif" font-size="14" fill="#000" text-anchor="start"  stroke="#000" stroke-width="0.3">V4</text>
<rect x="1066" y="578" width="74" height="26" fill="#f9f9fc" />
<rect x="1068" y="580" width="71" height="23" fill="#e2e2e2" />
<rect x="1068" y="580" width="70" height="22" fill="#6e6e6e" />
<rect x="1070" y="582" width="68" height="20" fill="#ffffff" />
<text transform="translate(1073,596) scale(0.93,1)" x="0" y="0" font-family="Liberation Serif" font-size="14" fill="#000" text-anchor="start"  stroke="#000" stroke-width="0.3">0</text>
<rect x="1150" y="578" width="74" height="26" fill="#f9f9fc" />
<rect x="1152" y="580" width="71" height="23" fill="#e2e2e2" />
<rect x="1152" y="580" width="70" height="22" fill="#6e6e6e" />
<rect x="1154" y="582" width="68" height="20" fill="#ffffff" />
<text transform="translate(1157,596) scale(0.93,1)" x="0" y="0" font-family="Liberation Serif" font-size="14" fill="#000" text-anchor="start"  stroke="#000" stroke-width="0.3">0</text>
<text x="1022.5" y="643.0" font-family="Liberation Serif" font-size="14" fill="#000" text-anchor="start"  stroke="#000" stroke-width="0.3">V5</text>
<rect x="1066" y="624" width="74" height="26" fill="#f9f9fc" />
<rect x="1068" y="626" width="71" height="23" fill="#e2e2e2" />
<rect x="1068" y="626" width="70" height="22" fill="#6e6e6e" />
<rect x="1070" y="628" width="68" height="20" fill="#ffffff" />
<text transform="translate(1073,642) scale(0.93,1)" x="0" y="0" font-family="Liberation Serif" font-size="14" fill="#000" text-anchor="start"  stroke="#000" stroke-width="0.3">0</text>
<rect x="1150" y="624" width="74" height="26" fill="#f9f9fc" />
<rect x="1152" y="626" width="71" height="23" fill="#e2e2e2" />
<rect x="1152" y="626" width="70" height="22" fill="#6e6e6e" />
<rect x="1154" y="628" width="68" height="20" fill="#ffffff" />
<text transform="translate(1157,642) scale(0.93,1)" x="0" y="0" font-family="Liberation Serif" font-size="14" fill="#000" text-anchor="start"  stroke="#000" stroke-width="0.3">0</text>
<text x="1022.5" y="689.2" font-family="Liberation Serif" font-size="14" fill="#000" text-anchor="start"  stroke="#000" stroke-width="0.3">V6</text>
<rect x="1066" y="671" width="74" height="26" fill="#f9f9fc" />
<rect x="1068" y="673" width="71" height="23" fill="#e2e2e2" />
<rect x="1068" y="673" width="70" height="22" fill="#6e6e6e" />
<rect x="1070" y="675" width="68" height="20" fill="#ffffff" />
<text transform="translate(1073,689) scale(0.93,1)" x="0" y="0" font-family="Liberation Serif" font-size="14" fill="#000" text-anchor="start"  stroke="#000" stroke-width="0.3">0</text>
<rect x="1150" y="671" width="74" height="26" fill="#f9f9fc" />
<rect x="1152" y="673" width="71" height="23" fill="#e2e2e2" />
<rect x="1152" y="673" width="70" height="22" fill="#6e6e6e" />
<rect x="1154" y="675" width="68" height="20" fill="#ffffff" />
<text transform="translate(1157,689) scale(0.93,1)" x="0" y="0" font-family="Liberation Serif" font-size="14" fill="#000" text-anchor="start"  stroke="#000" stroke-width="0.3">0</text>
<text x="408.5" y="527.3" font-family="Liberation Serif" font-size="14" fill="#000" text-anchor="start"  stroke="#000" stroke-width="0.3">Conclusion:</text>
<rect x="980" y="510" width="25" height="25" fill="#f0f0f0" />
<rect x="980" y="510" width="25" height="1" fill="#fdfdfd" />
<rect x="980" y="510" width="1" height="25" fill="#fdfdfd" />
<rect x="980" y="533" width="25" height="2" fill="#6a6a6a" />
<rect x="1003" y="510" width="2" height="25" fill="#6a6a6a" />
<path d="M983,521.5 L990,516.5 L990,526.5 Z" fill="#111"/><path d="M991.5,517 C994.5,518.5 994.5,524.5 991.5,526 M995.5,516 C999.5,518 999.5,525 995.5,527.5" fill="none" stroke="#111" stroke-width="1.6"/>
<rect x="409" y="540" width="595" height="173" fill="#ffffff" />
<rect x="409" y="540" width="595" height="1" fill="#6e6e6e" />
<rect x="409" y="540" width="2" height="173" fill="#6e6e6e" />
<rect x="409" y="712" width="595" height="1" fill="#e8e8e8" />
<rect x="1003" y="540" width="1" height="173" fill="#e8e8e8" />
<rect x="409" y="723" width="92" height="29" fill="#f0f0f0" />
<rect x="409" y="723" width="92" height="1" fill="#fdfdfd" />
<rect x="409" y="723" width="1" height="29" fill="#fdfdfd" />
<rect x="409" y="750" width="92" height="2" fill="#6a6a6a" />
<rect x="499" y="723" width="2" height="29" fill="#6a6a6a" />
<text x="455.0" y="741.7" font-family="Liberation Serif" font-size="14" fill="#000" text-anchor="middle"  stroke="#000" stroke-width="0.3">Show Term</text>
<text x="504.2" y="741.7" font-family="Liberation Serif" font-size="14" fill="#000" text-anchor="start"  stroke="#000" stroke-width="0.3">Operator:</text>
<rect x="566" y="721" width="94" height="25" fill="#f9f9fc" />
<rect x="567" y="722" width="92" height="23" fill="#f0f0f0" />
<rect x="567" y="722" width="92" height="2" fill="#6e6e6e" />
<rect x="567" y="722" width="2" height="23" fill="#6e6e6e" />
<rect x="569" y="744" width="72" height="1" fill="#e4e4e4" />
<rect x="641" y="724" width="16" height="19" fill="#f0f0f0" />
<rect x="641" y="724" width="16" height="1" fill="#fdfdfd" />
<rect x="641" y="724" width="1" height="19" fill="#fdfdfd" />
<rect x="641" y="743" width="18" height="2" fill="#6e6e6e" />
<rect x="657" y="722" width="2" height="23" fill="#6e6e6e" />
<path d="M644.5,731.5 L653,731.5 L648.75,736 Z" fill="#9a9a9a"/>
<text x="664.3" y="741.7" font-family="Liberation Serif" font-size="14" fill="#000" text-anchor="start"  stroke="#000" stroke-width="0.3">Diagnostician:</text>
<rect x="752" y="721" width="94" height="25" fill="#f9f9fc" />
<rect x="753" y="722" width="92" height="23" fill="#ffffff" />
<rect x="753" y="722" width="92" height="2" fill="#6e6e6e" />
<rect x="753" y="722" width="2" height="23" fill="#6e6e6e" />
<rect x="755" y="744" width="72" height="1" fill="#e4e4e4" />
<rect x="827" y="724" width="16" height="19" fill="#f0f0f0" />
<rect x="827" y="724" width="16" height="1" fill="#fdfdfd" />
<rect x="827" y="724" width="1" height="19" fill="#fdfdfd" />
<rect x="827" y="743" width="18" height="2" fill="#6e6e6e" />
<rect x="843" y="722" width="2" height="23" fill="#6e6e6e" />
<path d="M830.5,731.5 L839,731.5 L834.75,736 Z" fill="#111"/>
<text x="850.5" y="741.7" font-family="Liberation Serif" font-size="14" fill="#000" text-anchor="start"  stroke="#000" stroke-width="0.3">Audit Doctor:</text>
<rect x="939" y="721" width="94" height="25" fill="#f9f9fc" />
<rect x="940" y="722" width="92" height="23" fill="#f0f0f0" />
<rect x="940" y="722" width="92" height="2" fill="#6e6e6e" />
<rect x="940" y="722" width="2" height="23" fill="#6e6e6e" />
<rect x="942" y="744" width="72" height="1" fill="#e4e4e4" />
<rect x="1014" y="724" width="16" height="19" fill="#f0f0f0" />
<rect x="1014" y="724" width="16" height="1" fill="#fdfdfd" />
<rect x="1014" y="724" width="1" height="19" fill="#fdfdfd" />
<rect x="1014" y="743" width="18" height="2" fill="#6e6e6e" />
<rect x="1030" y="722" width="2" height="23" fill="#6e6e6e" />
<path d="M1017.5,731.5 L1026,731.5 L1021.75,736 Z" fill="#9a9a9a"/>
<rect x="1043" y="723" width="93" height="29" fill="#f0f0f0" />
<rect x="1043" y="723" width="93" height="1" fill="#fdfdfd" />
<rect x="1043" y="723" width="1" height="29" fill="#fdfdfd" />
<rect x="1043" y="750" width="93" height="2" fill="#6a6a6a" />
<rect x="1134" y="723" width="2" height="29" fill="#6a6a6a" />
<text x="1089.5" y="741.7" font-family="Liberation Serif" font-size="14" fill="#000" text-anchor="middle"  stroke="#000" stroke-width="0.3">Update</text>
<rect x="1139" y="723" width="93" height="29" fill="#f0f0f0" />
<rect x="1139" y="723" width="93" height="1" fill="#fdfdfd" />
<rect x="1139" y="723" width="1" height="29" fill="#fdfdfd" />
<rect x="1139" y="750" width="93" height="2" fill="#6a6a6a" />
<rect x="1230" y="723" width="2" height="29" fill="#6a6a6a" />
<text x="1185.5" y="741.7" font-family="Liberation Serif" font-size="14" fill="#000" text-anchor="middle"  stroke="#000" stroke-width="0.3">Print</text>
<rect x="524" y="777" width="92" height="27" fill="#f0f0f0" />
<rect x="524" y="777" width="92" height="1" fill="#fdfdfd" />
<rect x="524" y="777" width="1" height="27" fill="#fdfdfd" />
<rect x="524" y="802" width="92" height="2" fill="#6a6a6a" />
<rect x="614" y="777" width="2" height="27" fill="#6a6a6a" />
<text x="570.0" y="794.2" font-family="Liberation Serif" font-size="14" fill="#000" text-anchor="middle"  stroke="#000" stroke-width="0.3">OK</text>
<rect x="1028" y="777" width="93" height="27" fill="#f0f0f0" />
<rect x="1028" y="777" width="93" height="1" fill="#fdfdfd" />
<rect x="1028" y="777" width="1" height="27" fill="#fdfdfd" />
<rect x="1028" y="802" width="93" height="2" fill="#6a6a6a" />
<rect x="1119" y="777" width="2" height="27" fill="#6a6a6a" />
<text x="1074.5" y="794.2" font-family="Liberation Serif" font-size="14" fill="#000" text-anchor="middle"  stroke="#000" stroke-width="0.3">Cancel</text>
</svg></body></html>
